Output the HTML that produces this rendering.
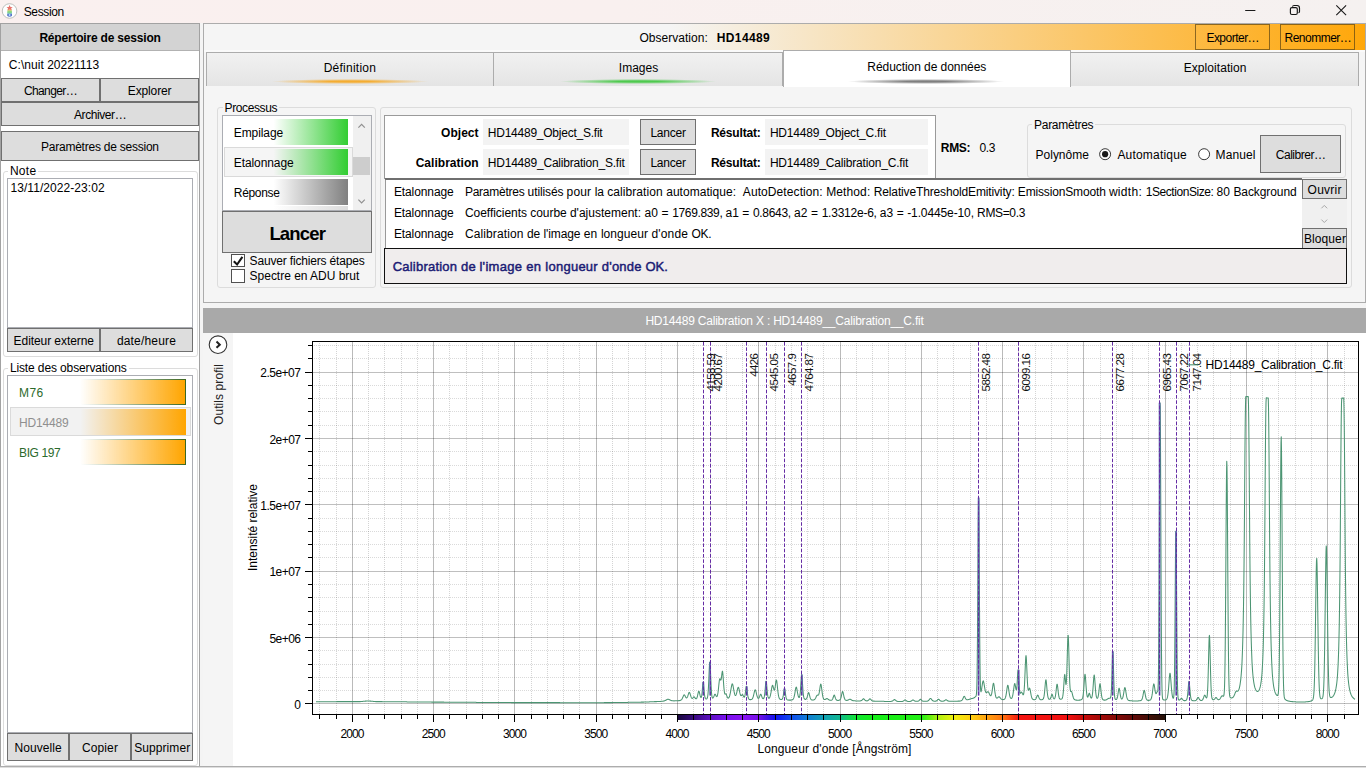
<!DOCTYPE html>
<html lang="fr"><head><meta charset="utf-8"><title>Session</title>
<style>
html,body{margin:0;padding:0;}
body{width:1366px;height:768px;overflow:hidden;background:#f9f0ef;font-family:"Liberation Sans",sans-serif;font-size:12px;color:#000;position:relative;}
.a{position:absolute;box-sizing:border-box;}
.t{position:absolute;white-space:pre;}
.btn{background:#dddddd;border:1px solid #707070;}
.gb{border:1px solid #dcdcdc;border-radius:3px;}
svg{position:absolute;left:0;top:0;}
svg text{font-family:"Liberation Sans",sans-serif;}
</style></head><body>
<div class="a " style="left:0px;top:0px;width:1366px;height:23px;background:linear-gradient(to right,#faf0ef 0,#f9f0ef 45%,#f5f1f0 100%);"></div>
<svg width="24" height="24" viewBox="0 0 24 24" style="left:0;top:0">
<circle cx="9.55" cy="11" r="7.3" fill="#fefefe" stroke="#b4b8b4" stroke-width="0.9"/>
<g opacity=".82"><rect x="7.6" y="9.2" width="4" height="1.6" fill="#f0a040"/><rect x="7.3" y="10.6" width="4.6" height="2.4" fill="#7ad060"/>
<rect x="7.3" y="12.6" width="4.6" height="1.2" fill="#50c0a0"/>
<path d="M7.2 13.8 H12 V15.6 Q11.4 16.8 9.6 16.8 Q7.8 16.8 7.2 15.6 Z" fill="#3a5cc0"/><circle cx="9.6" cy="15" r="0.9" fill="#9fd8ff"/>
<path d="M9.6 4.9 L10.5 7.0 L12.7 7.2 L11.1 8.5 L11.6 10.2 L9.6 9.2 L7.6 10.2 L8.1 8.5 L6.5 7.2 L8.7 7.0 Z" fill="#e2524a"/></g>
</svg>
<span class="t" style="left:23.70px;top:3px;font-size:12px;line-height:18px;letter-spacing:-0.356px;">Session</span>
<svg width="140" height="24" viewBox="1226 0 140 24" style="left:1226px;top:0">
<path d="M1245.2 10.5 H1255.4" stroke="#1a1a1a" stroke-width="1" fill="none"/>
<rect x="1290.4" y="7.6" width="6.9" height="6.9" rx="1.5" fill="none" stroke="#151515" stroke-width="1.15"/>
<path d="M1292.4 6.6 Q1292.7 5.5 1294 5.5 H1297 Q1299.5 5.5 1299.5 8 V11.4 Q1299.5 12.4 1298.5 12.6" fill="none" stroke="#151515" stroke-width="1.15"/>
<path d="M1336.3 5.4 L1346.1 15.2 M1346.1 5.4 L1336.3 15.2" stroke="#1a1a1a" stroke-width="1.1" fill="none"/>
</svg>
<div class="a " style="left:0px;top:23px;width:1366px;height:745px;background:#f4f4f4;"></div>
<div class="a " style="left:0px;top:23px;width:200px;height:744px;background:#fff;border:1px solid #a2a2a2;"></div>
<div class="a " style="left:1px;top:24px;width:198px;height:27px;background:#d3d3d3;border-bottom:1px solid #b2b2b2;"></div>
<span class="t" style="left:39.40px;top:29px;font-size:12px;line-height:18px;letter-spacing:-0.194px;font-weight:bold;">Répertoire de session</span>
<span class="t" style="left:8.80px;top:56px;font-size:12px;line-height:18px;letter-spacing:0.043px;">C:\nuit 20221113</span>
<div class="a btn" style="left:1px;top:78px;width:99px;height:24px;"></div>
<div class="a btn" style="left:100px;top:78px;width:99px;height:24px;"></div>
<span class="t" style="left:23.90px;top:82px;font-size:12px;line-height:18px;letter-spacing:-0.603px;">Changer…</span>
<span class="t" style="left:127.80px;top:82px;font-size:12px;line-height:18px;letter-spacing:-0.135px;">Explorer</span>
<div class="a btn" style="left:1px;top:102px;width:198px;height:24px;"></div>
<span class="t" style="left:74.00px;top:106px;font-size:12px;line-height:18px;letter-spacing:-0.423px;">Archiver…</span>
<div class="a btn" style="left:1px;top:131px;width:198px;height:29.5px;"></div>
<span class="t" style="left:41.00px;top:138px;font-size:12px;line-height:18px;letter-spacing:-0.234px;">Paramètres de session</span>
<div class="a gb" style="left:2.5px;top:170.5px;width:195px;height:186px;"></div>
<div class="a " style="left:8px;top:164px;width:30px;height:14px;background:#fff;"></div>
<span class="t" style="left:9.90px;top:162px;font-size:12px;line-height:18px;letter-spacing:0.288px;">Note</span>
<div class="a " style="left:7px;top:178px;width:186px;height:150px;background:#fff;border:1px solid #abadb3;"></div>
<span class="t" style="left:10.40px;top:179px;font-size:12px;line-height:18px;letter-spacing:0.070px;">13/11/2022-23:02</span>
<div class="a btn" style="left:7px;top:328px;width:93px;height:24px;"></div>
<div class="a btn" style="left:100px;top:328px;width:93px;height:24px;"></div>
<span class="t" style="left:13.60px;top:332px;font-size:12px;line-height:18px;letter-spacing:-0.072px;">Editeur externe</span>
<span class="t" style="left:116.90px;top:332px;font-size:12px;line-height:18px;letter-spacing:0.183px;">date/heure</span>
<div class="a gb" style="left:2.5px;top:367.5px;width:195px;height:398px;"></div>
<div class="a " style="left:8px;top:361px;width:121px;height:14px;background:#fff;"></div>
<span class="t" style="left:9.90px;top:359px;font-size:12px;line-height:18px;letter-spacing:-0.122px;">Liste des observations</span>
<div class="a " style="left:7px;top:375px;width:186px;height:358px;background:#fff;border:1px solid #abadb3;"></div>
<div class="a " style="left:9.5px;top:379px;width:176.5px;height:26px;background:linear-gradient(to right,rgba(50,95,20,0) 0,rgba(50,95,20,0) 40%,rgba(50,95,20,.95) 100%);"></div>
<div class="a " style="left:9.5px;top:380px;width:175.5px;height:24px;background:linear-gradient(to right,rgba(255,165,0,0) 0,rgba(255,165,0,0) 40%,#ffa500 100%),#fff;"></div>
<span class="t" style="left:19.10px;top:384px;font-size:12px;line-height:18px;letter-spacing:0.319px;color:#2c6a2c;">M76</span>
<div class="a " style="left:9.5px;top:407.3px;width:181px;height:29px;background:#f2f2f2;border:1px solid #dadada;"></div>
<div class="a " style="left:9.5px;top:409.3px;width:176.5px;height:25.5px;background:linear-gradient(to right,rgba(255,165,0,0) 0,rgba(255,165,0,0) 40%,#ffa500 100%);"></div>
<span class="t" style="left:19.10px;top:414px;font-size:12px;line-height:18px;letter-spacing:-0.171px;color:#8f8f8f;">HD14489</span>
<div class="a " style="left:9.5px;top:439px;width:176.5px;height:26px;background:linear-gradient(to right,rgba(50,95,20,0) 0,rgba(50,95,20,0) 40%,rgba(50,95,20,.95) 100%);"></div>
<div class="a " style="left:9.5px;top:440px;width:175.5px;height:24px;background:linear-gradient(to right,rgba(255,165,0,0) 0,rgba(255,165,0,0) 40%,#ffa500 100%),#fff;"></div>
<span class="t" style="left:19.10px;top:444px;font-size:12px;line-height:18px;letter-spacing:-0.404px;color:#2c6a2c;">BIG 197</span>
<div class="a btn" style="left:7px;top:733px;width:62px;height:27.5px;"></div>
<div class="a btn" style="left:69px;top:733px;width:62px;height:27.5px;"></div>
<div class="a btn" style="left:131px;top:733px;width:62px;height:27.5px;"></div>
<span class="t" style="left:14.40px;top:739px;font-size:12px;line-height:18px;letter-spacing:0.101px;">Nouvelle</span>
<span class="t" style="left:82.00px;top:739px;font-size:12px;line-height:18px;letter-spacing:0.109px;">Copier</span>
<span class="t" style="left:134.20px;top:739px;font-size:12px;line-height:18px;letter-spacing:0.083px;">Supprimer</span>
<div class="a " style="left:203px;top:23px;width:1163px;height:280px;background:#f5f5f5;border:1px solid #acacac;"></div>
<div class="a " style="left:204px;top:50px;width:1161px;height:2px;background:#fafafa;"></div>
<div class="a " style="left:204px;top:24px;width:1161px;height:26px;background:linear-gradient(to right,#f5f5f5 0,#f5f5f5 40%,#ffa70a 100%);"></div>
<span class="t" style="left:639.40px;top:29px;font-size:12px;line-height:18px;letter-spacing:0.031px;">Observation:</span>
<span class="t" style="left:716.70px;top:29px;font-size:12px;line-height:18px;letter-spacing:0.400px;font-weight:bold;">HD14489</span>
<div class="a " style="left:1195px;top:24px;width:75px;height:26px;border:1px solid rgba(95,70,20,.72);"></div>
<div class="a " style="left:1280px;top:24px;width:75px;height:26px;border:1px solid rgba(95,70,20,.72);"></div>
<span class="t" style="left:1206.40px;top:29px;font-size:12px;line-height:18px;letter-spacing:-0.517px;">Exporter…</span>
<span class="t" style="left:1284.50px;top:29px;font-size:12px;line-height:18px;letter-spacing:-0.505px;">Renommer…</span>
<div class="a " style="left:206px;top:52px;width:288px;height:34px;background:linear-gradient(to bottom,#f1f1f1 0,#ebebeb 50%,#e4e4e4 100%);border:1px solid #acacac;border-bottom:none;"></div>
<div class="a " style="left:493px;top:52px;width:290px;height:34px;background:linear-gradient(to bottom,#f1f1f1 0,#ebebeb 50%,#e4e4e4 100%);border:1px solid #acacac;border-bottom:none;"></div>
<div class="a " style="left:1070px;top:52px;width:289px;height:34px;background:linear-gradient(to bottom,#f1f1f1 0,#ebebeb 50%,#e4e4e4 100%);border:1px solid #acacac;border-bottom:none;"></div>
<div class="a " style="left:782.5px;top:50px;width:288px;height:36.5px;background:#fff;border:1px solid #acacac;border-bottom:none;"></div>
<div class="a " style="left:272px;top:79px;width:156px;height:5.4px;background:radial-gradient(ellipse 50% 50% at 50% 50%,rgba(245,170,40,.95) 0,rgba(245,170,40,.95) 25%,rgba(255,255,255,0) 100%);"></div>
<div class="a " style="left:560px;top:79px;width:156px;height:5.4px;background:radial-gradient(ellipse 50% 50% at 50% 50%,rgba(70,200,70,.95) 0,rgba(70,200,70,.95) 25%,rgba(255,255,255,0) 100%);"></div>
<div class="a " style="left:848px;top:79px;width:156px;height:5.4px;background:radial-gradient(ellipse 50% 50% at 50% 50%,rgba(105,105,105,.85) 0,rgba(105,105,105,.85) 25%,rgba(255,255,255,0) 100%);"></div>
<span class="t" style="left:323.70px;top:59px;font-size:12px;line-height:18px;letter-spacing:0.248px;">Définition</span>
<span class="t" style="left:618.80px;top:59px;font-size:12px;line-height:18px;letter-spacing:0.009px;">Images</span>
<span class="t" style="left:867.30px;top:58px;font-size:12px;line-height:18px;letter-spacing:-0.059px;">Réduction de données</span>
<span class="t" style="left:1183.70px;top:59px;font-size:12px;line-height:18px;letter-spacing:0.072px;">Exploitation</span>
<div class="a gb" style="left:217px;top:107px;width:159px;height:181px;"></div>
<div class="a " style="left:223px;top:101px;width:56px;height:13px;background:#f5f5f5;"></div>
<span class="t" style="left:224.60px;top:99px;font-size:12px;line-height:18px;letter-spacing:-0.391px;">Processus</span>
<div class="a " style="left:222px;top:115px;width:150px;height:96px;background:#fff;border:1px solid #abadb3;"></div>
<div class="a " style="left:224px;top:119px;width:124px;height:26px;background:linear-gradient(to right,rgba(50,205,50,0) 0,rgba(50,205,50,0) 40%,#32cd32 100%);"></div>
<div class="a " style="left:224px;top:147px;width:129px;height:30px;background:#f5f5f5;border:1px solid #dadada;"></div>
<div class="a " style="left:224px;top:149px;width:124px;height:26px;background:linear-gradient(to right,rgba(50,205,50,0) 0,rgba(50,205,50,0) 40%,#32cd32 100%);"></div>
<div class="a " style="left:224px;top:179px;width:124px;height:26px;background:linear-gradient(to right,rgba(128,128,128,0) 0,rgba(128,128,128,0) 40%,#808080 100%);"></div>
<div class="a " style="left:224px;top:206px;width:124px;height:4px;background:linear-gradient(to right,rgba(128,128,128,0) 0,rgba(128,128,128,0) 40%,rgba(128,128,128,.28) 100%);"></div>
<div class="a " style="left:353px;top:116px;width:18px;height:94px;background:#f0f0f0;"></div>
<div class="a " style="left:353px;top:157px;width:17px;height:18px;background:#cdcdcd;"></div>
<svg width="20" height="95" viewBox="352 115 20 95" style="left:352px;top:115px"><path d="M358.4 127.6 L361.6 124.4 L364.8 127.6" fill="none" stroke="#909090" stroke-width="1.2"/><path d="M358.4 199.6 L361.6 202.8 L364.8 199.6" fill="none" stroke="#909090" stroke-width="1.2"/></svg>
<span class="t" style="left:233.80px;top:124px;font-size:12px;line-height:18px;letter-spacing:-0.091px;">Empilage</span>
<span class="t" style="left:233.80px;top:154px;font-size:12px;line-height:18px;letter-spacing:-0.092px;">Etalonnage</span>
<span class="t" style="left:233.80px;top:184px;font-size:12px;line-height:18px;letter-spacing:-0.319px;">Réponse</span>
<div class="a btn" style="left:222px;top:211px;width:150px;height:42px;"></div>
<span class="t" style="left:269.40px;top:219px;font-size:18.5px;line-height:29px;letter-spacing:-0.844px;font-weight:bold;">Lancer</span>
<div class="a " style="left:231px;top:254px;width:14px;height:13px;background:#fff;border:1px solid #505050;"></div>
<svg width="14" height="14" viewBox="0 0 14 14" style="left:231px;top:254px"><path d="M2.8 7.3 L6.1 10.5 L11.4 2.8" fill="none" stroke="#151515" stroke-width="2.1"/></svg>
<div class="a " style="left:231px;top:269px;width:14px;height:14px;background:#fff;border:1px solid #505050;"></div>
<span class="t" style="left:249.60px;top:252px;font-size:12px;line-height:18px;letter-spacing:-0.169px;">Sauver fichiers étapes</span>
<span class="t" style="left:249.60px;top:267px;font-size:12px;line-height:18px;letter-spacing:-0.018px;">Spectre en ADU brut</span>
<div class="a gb" style="left:379.5px;top:107px;width:972px;height:181px;"></div>
<div class="a " style="left:384px;top:115px;width:552px;height:64px;background:#fff;border:1px solid #9a9a9a;border-bottom:none;"></div>
<div class="a " style="left:384.5px;top:178px;width:917.5px;height:1.6px;background:#6f6f6f;"></div>
<span class="t" style="left:441.00px;top:124px;font-size:12px;line-height:18px;letter-spacing:0.044px;font-weight:bold;">Object</span>
<span class="t" style="left:415.70px;top:154px;font-size:12px;line-height:18px;letter-spacing:0.021px;font-weight:bold;">Calibration</span>
<div class="a " style="left:483.3px;top:119px;width:146px;height:25.6px;background:#f3f3f3;"></div>
<div class="a btn" style="left:640px;top:119px;width:56px;height:25.7px;"></div>
<div class="a " style="left:765.3px;top:119px;width:163px;height:25.6px;background:#f3f3f3;"></div>
<div class="a " style="left:483.3px;top:149px;width:146px;height:25.6px;background:#f3f3f3;"></div>
<div class="a btn" style="left:640px;top:149px;width:56px;height:25.7px;"></div>
<div class="a " style="left:765.3px;top:149px;width:163px;height:25.6px;background:#f3f3f3;"></div>
<span class="t" style="left:487.80px;top:124px;font-size:12px;line-height:18px;letter-spacing:-0.240px;">HD14489_Object_S.fit</span>
<span class="t" style="left:487.80px;top:154px;font-size:12px;line-height:18px;letter-spacing:-0.215px;">HD14489_Calibration_S.fit</span>
<span class="t" style="left:650.40px;top:124px;font-size:12px;line-height:18px;letter-spacing:-0.215px;">Lancer</span>
<span class="t" style="left:650.40px;top:154px;font-size:12px;line-height:18px;letter-spacing:-0.215px;">Lancer</span>
<span class="t" style="left:710.90px;top:124px;font-size:12px;line-height:18px;letter-spacing:-0.182px;font-weight:bold;">Résultat:</span>
<span class="t" style="left:710.90px;top:154px;font-size:12px;line-height:18px;letter-spacing:-0.182px;font-weight:bold;">Résultat:</span>
<span class="t" style="left:769.90px;top:124px;font-size:12px;line-height:18px;letter-spacing:-0.208px;">HD14489_Object_C.fit</span>
<span class="t" style="left:769.90px;top:154px;font-size:12px;line-height:18px;letter-spacing:-0.182px;">HD14489_Calibration_C.fit</span>
<span class="t" style="left:940.80px;top:139px;font-size:12px;line-height:18px;letter-spacing:-0.315px;font-weight:bold;">RMS:</span>
<span class="t" style="left:979.40px;top:139px;font-size:12px;line-height:18px;letter-spacing:-0.293px;">0.3</span>
<div class="a gb" style="left:1027px;top:124px;width:318.5px;height:53.5px;"></div>
<div class="a " style="left:1032px;top:118px;width:63px;height:13px;background:#f5f5f5;"></div>
<span class="t" style="left:1034.00px;top:116px;font-size:12px;line-height:18px;letter-spacing:-0.272px;">Paramètres</span>
<span class="t" style="left:1035.60px;top:146px;font-size:12px;line-height:18px;letter-spacing:-0.020px;">Polynôme</span>
<svg width="120" height="16" viewBox="1096 146 120 16" style="left:1096px;top:146px"><circle cx="1105.1" cy="154.2" r="5.5" fill="#fff" stroke="#3a3a3a" stroke-width="1"/><circle cx="1105.1" cy="154.2" r="3.1" fill="#1a1a1a"/><circle cx="1204.1" cy="154.2" r="5.5" fill="#fff" stroke="#3a3a3a" stroke-width="1"/></svg>
<span class="t" style="left:1117.40px;top:146px;font-size:12px;line-height:18px;letter-spacing:0.193px;">Automatique</span>
<span class="t" style="left:1215.60px;top:146px;font-size:12px;line-height:18px;letter-spacing:0.108px;">Manuel</span>
<div class="a btn" style="left:1260px;top:135.2px;width:81px;height:37.5px;"></div>
<span class="t" style="left:1275.80px;top:146px;font-size:12px;line-height:18px;letter-spacing:-0.490px;">Calibrer…</span>
<div class="a " style="left:384.5px;top:179.5px;width:917px;height:69px;background:#fff;border-left:1px solid #9a9a9a;"></div>
<div class="a " style="left:1301.5px;top:179px;width:45.5px;height:70px;background:#f0f0f0;"></div>
<div class="a btn" style="left:1301.5px;top:179px;width:45.5px;height:19.5px;"></div>
<div class="a btn" style="left:1301.5px;top:228px;width:45.5px;height:21px;"></div>
<span class="t" style="left:1307.60px;top:181px;font-size:12px;line-height:18px;letter-spacing:0.223px;">Ouvrir</span>
<span class="t" style="left:1303.90px;top:230px;font-size:12px;line-height:18px;letter-spacing:0.106px;">Bloquer</span>
<svg width="12" height="24" viewBox="1318 202 12 24" style="left:1318px;top:202px"><path d="M1321.4 208.3 L1324.3 205.4 L1327.2 208.3" fill="none" stroke="#a8a8a8" stroke-width="1"/><path d="M1321.4 219.6 L1324.3 222.5 L1327.2 219.6" fill="none" stroke="#a8a8a8" stroke-width="1"/></svg>
<span class="t" style="left:393.90px;top:183px;font-size:12px;line-height:18px;letter-spacing:-0.102px;">Etalonnage</span>
<span class="t" style="left:393.90px;top:204px;font-size:12px;line-height:18px;letter-spacing:-0.102px;">Etalonnage</span>
<span class="t" style="left:393.90px;top:225px;font-size:12px;line-height:18px;letter-spacing:-0.102px;">Etalonnage</span>
<span class="t" style="left:464.90px;top:183px;font-size:12px;line-height:18px;letter-spacing:-0.241px;">Paramètres </span>
<span class="t" style="left:527.60px;top:183px;font-size:12px;line-height:18px;letter-spacing:-0.113px;">utilisés </span>
<span class="t" style="left:566.60px;top:183px;font-size:12px;line-height:18px;letter-spacing:0.150px;">pour </span>
<span class="t" style="left:594.70px;top:183px;font-size:12px;line-height:18px;letter-spacing:-0.058px;">la </span>
<span class="t" style="left:607.20px;top:183px;font-size:12px;line-height:18px;letter-spacing:0.081px;">calibration </span>
<span class="t" style="left:666.20px;top:183px;font-size:12px;line-height:18px;letter-spacing:0.040px;">automatique:  </span>
<span class="t" style="left:742.80px;top:183px;font-size:12px;line-height:18px;letter-spacing:0.090px;">AutoDetection: </span>
<span class="t" style="left:826.20px;top:183px;font-size:12px;line-height:18px;letter-spacing:0.114px;">Method: </span>
<span class="t" style="left:873.80px;top:183px;font-size:12px;line-height:18px;letter-spacing:-0.144px;">RelativeThresholdEmitivity: </span>
<span class="t" style="left:1017.80px;top:183px;font-size:12px;line-height:18px;letter-spacing:-0.151px;">EmissionSmooth </span>
<span class="t" style="left:1108.90px;top:183px;font-size:12px;line-height:18px;letter-spacing:0.303px;">width: </span>
<span class="t" style="left:1145.70px;top:183px;font-size:12px;line-height:18px;letter-spacing:-0.429px;">1SectionSize: </span>
<span class="t" style="left:1216.40px;top:183px;font-size:12px;line-height:18px;letter-spacing:0.107px;">80 </span>
<span class="t" style="left:1233.40px;top:183px;font-size:12px;line-height:18px;letter-spacing:-0.084px;">Background</span>
<span class="t" style="left:464.90px;top:204px;font-size:12px;line-height:18px;letter-spacing:-0.031px;">Coefficients </span>
<span class="t" style="left:530.30px;top:204px;font-size:12px;line-height:18px;letter-spacing:-0.060px;">courbe </span>
<span class="t" style="left:569.90px;top:204px;font-size:12px;line-height:18px;letter-spacing:0.012px;">d'ajustement: </span>
<span class="t" style="left:644.40px;top:204px;font-size:12px;line-height:18px;letter-spacing:0.155px;">a0 = </span>
<span class="t" style="left:672.20px;top:204px;font-size:12px;line-height:18px;letter-spacing:-0.351px;">1769.839, </span>
<span class="t" style="left:725.40px;top:204px;font-size:12px;line-height:18px;letter-spacing:0.095px;">a1 = </span>
<span class="t" style="left:752.90px;top:204px;font-size:12px;line-height:18px;letter-spacing:-0.296px;">0.8643, </span>
<span class="t" style="left:793.90px;top:204px;font-size:12px;line-height:18px;letter-spacing:0.155px;">a2 = </span>
<span class="t" style="left:821.70px;top:204px;font-size:12px;line-height:18px;letter-spacing:-0.237px;">1.3312e-6, </span>
<span class="t" style="left:879.80px;top:204px;font-size:12px;line-height:18px;letter-spacing:0.075px;">a3 = </span>
<span class="t" style="left:907.20px;top:204px;font-size:12px;line-height:18px;letter-spacing:-0.114px;">-1.0445e-10, </span>
<span class="t" style="left:977.10px;top:204px;font-size:12px;line-height:18px;letter-spacing:-0.351px;">RMS=0.3</span>
<span class="t" style="left:464.90px;top:225px;font-size:12px;line-height:18px;letter-spacing:0.117px;">Calibration </span>
<span class="t" style="left:527.00px;top:225px;font-size:12px;line-height:18px;letter-spacing:-0.093px;">de </span>
<span class="t" style="left:543.40px;top:225px;font-size:12px;line-height:18px;letter-spacing:-0.084px;">l'image </span>
<span class="t" style="left:583.70px;top:225px;font-size:12px;line-height:18px;letter-spacing:0.173px;">en </span>
<span class="t" style="left:600.90px;top:225px;font-size:12px;line-height:18px;letter-spacing:0.063px;">longueur </span>
<span class="t" style="left:651.50px;top:225px;font-size:12px;line-height:18px;letter-spacing:0.158px;">d'onde </span>
<span class="t" style="left:691.60px;top:225px;font-size:12px;line-height:18px;letter-spacing:-0.324px;">OK.</span>
<div class="a " style="left:384px;top:248px;width:963px;height:35.6px;background:#f0eded;border:1.4px solid #111;"></div>
<span class="t" style="left:392.70px;top:256px;font-size:13px;line-height:21px;letter-spacing:0.221px;color:#1b1b74;-webkit-text-stroke:0.45px #1b1b74;">Calibration </span>
<span class="t" style="left:461.10px;top:256px;font-size:13px;line-height:21px;letter-spacing:0.077px;color:#1b1b74;-webkit-text-stroke:0.45px #1b1b74;">de </span>
<span class="t" style="left:479.40px;top:256px;font-size:13px;line-height:21px;letter-spacing:0.314px;color:#1b1b74;-webkit-text-stroke:0.45px #1b1b74;">l'image </span>
<span class="t" style="left:526.30px;top:256px;font-size:13px;line-height:21px;letter-spacing:0.310px;color:#1b1b74;-webkit-text-stroke:0.45px #1b1b74;">en </span>
<span class="t" style="left:545.30px;top:256px;font-size:13px;line-height:21px;letter-spacing:0.255px;color:#1b1b74;-webkit-text-stroke:0.45px #1b1b74;">longueur </span>
<span class="t" style="left:601.80px;top:256px;font-size:13px;line-height:21px;letter-spacing:0.209px;color:#1b1b74;-webkit-text-stroke:0.45px #1b1b74;">d'onde </span>
<span class="t" style="left:645.50px;top:256px;font-size:13px;line-height:21px;letter-spacing:0.002px;color:#1b1b74;-webkit-text-stroke:0.45px #1b1b74;">OK.</span>
<div class="a " style="left:203px;top:308px;width:1163px;height:25px;background:#a9a9a9;"></div>
<span class="t" style="left:645.40px;top:312px;font-size:12px;line-height:18px;letter-spacing:-0.208px;color:#fff;">HD14489 Calibration X : HD14489__Calibration__C.fit</span>
<div class="a " style="left:203px;top:333px;width:1163px;height:433px;background:#fff;"></div>
<div class="a " style="left:203px;top:333px;width:30px;height:433px;background:#f5f5f5;"></div>
<div class="a " style="left:0px;top:766px;width:1366px;height:1px;background:#adadad;"></div>
<div class="a " style="left:0px;top:767px;width:1366px;height:1px;background:#dedede;"></div>
<svg width="1163" height="435" viewBox="203 333 1163 435" style="left:203px;top:333px" font-size="12">
<path d="M314.0 690.5 H1358.5 M314.0 677.5 H1358.5 M314.0 664.5 H1358.5 M314.0 650.5 H1358.5 M314.0 624.5 H1358.5 M314.0 611.5 H1358.5 M314.0 597.5 H1358.5 M314.0 584.5 H1358.5 M314.0 557.5 H1358.5 M314.0 544.5 H1358.5 M314.0 531.5 H1358.5 M314.0 518.5 H1358.5 M314.0 491.5 H1358.5 M314.0 478.5 H1358.5 M314.0 465.5 H1358.5 M314.0 451.5 H1358.5 M314.0 425.5 H1358.5 M314.0 411.5 H1358.5 M314.0 398.5 H1358.5 M314.0 385.5 H1358.5 M314.0 358.5 H1358.5 M314.0 345.5 H1358.5" stroke="#000" stroke-opacity=".145" stroke-width="1" stroke-dasharray="1 1" shape-rendering="crispEdges" fill="none"/>
<path d="M319.5 343.0 V714.5 M336.5 343.0 V714.5 M368.5 343.0 V714.5 M384.5 343.0 V714.5 M401.5 343.0 V714.5 M417.5 343.0 V714.5 M449.5 343.0 V714.5 M466.5 343.0 V714.5 M482.5 343.0 V714.5 M498.5 343.0 V714.5 M531.5 343.0 V714.5 M547.5 343.0 V714.5 M563.5 343.0 V714.5 M579.5 343.0 V714.5 M612.5 343.0 V714.5 M628.5 343.0 V714.5 M645.5 343.0 V714.5 M661.5 343.0 V714.5 M693.5 343.0 V714.5 M710.5 343.0 V714.5 M726.5 343.0 V714.5 M742.5 343.0 V714.5 M775.5 343.0 V714.5 M791.5 343.0 V714.5 M807.5 343.0 V714.5 M823.5 343.0 V714.5 M856.5 343.0 V714.5 M872.5 343.0 V714.5 M888.5 343.0 V714.5 M905.5 343.0 V714.5 M937.5 343.0 V714.5 M953.5 343.0 V714.5 M970.5 343.0 V714.5 M986.5 343.0 V714.5 M1018.5 343.0 V714.5 M1035.5 343.0 V714.5 M1051.5 343.0 V714.5 M1067.5 343.0 V714.5 M1100.5 343.0 V714.5 M1116.5 343.0 V714.5 M1132.5 343.0 V714.5 M1148.5 343.0 V714.5 M1181.5 343.0 V714.5 M1197.5 343.0 V714.5 M1213.5 343.0 V714.5 M1230.5 343.0 V714.5 M1262.5 343.0 V714.5 M1278.5 343.0 V714.5 M1295.5 343.0 V714.5 M1311.5 343.0 V714.5 M1344.5 343.0 V714.5" stroke="#000" stroke-opacity=".17" stroke-width="1" stroke-dasharray="1 1" shape-rendering="crispEdges" fill="none"/>
<path d="M312.5 703.5 H1358.5 M312.5 637.5 H1358.5 M312.5 571.5 H1358.5 M312.5 504.5 H1358.5 M312.5 438.5 H1358.5 M312.5 372.5 H1358.5" stroke="#000" stroke-opacity=".25" stroke-width="1" shape-rendering="crispEdges" fill="none"/>
<path d="M352.5 341.5 V714.5 M433.5 341.5 V714.5 M514.5 341.5 V714.5 M596.5 341.5 V714.5 M677.5 341.5 V714.5 M758.5 341.5 V714.5 M840.5 341.5 V714.5 M921.5 341.5 V714.5 M1002.5 341.5 V714.5 M1083.5 341.5 V714.5 M1165.5 341.5 V714.5 M1246.5 341.5 V714.5 M1327.5 341.5 V714.5" stroke="#000" stroke-opacity=".27" stroke-width="1" shape-rendering="crispEdges" fill="none"/>
<path d="M316.00 701.7 L316.25 701.7 L316.50 701.7 L316.75 701.7 L317.00 701.7 L317.25 701.7 L317.50 701.7 L317.75 701.7 L318.00 701.7 L318.25 701.7 L318.50 701.7 L318.75 701.7 L319.00 701.7 L319.25 701.7 L319.50 701.7 L319.75 701.7 L320.00 701.7 L320.25 701.7 L320.50 701.7 L320.75 701.7 L321.00 701.7 L321.25 701.7 L321.50 701.7 L321.75 701.7 L322.00 701.7 L322.25 701.7 L322.50 701.7 L322.75 701.7 L323.00 701.7 L323.25 701.7 L323.50 701.7 L323.75 701.7 L324.00 701.7 L324.25 701.7 L324.50 701.7 L324.75 701.7 L325.00 701.7 L325.25 701.7 L325.50 701.7 L325.75 701.7 L326.00 701.7 L326.25 701.7 L326.50 701.7 L326.75 701.7 L327.00 701.7 L327.25 701.7 L327.50 701.7 L327.75 701.7 L328.00 701.7 L328.25 701.7 L328.50 701.7 L328.75 701.7 L329.00 701.7 L329.25 701.7 L329.50 701.7 L329.75 701.7 L330.00 701.7 L330.25 701.7 L330.50 701.7 L330.75 701.7 L331.00 701.7 L331.25 701.7 L331.50 701.7 L331.75 701.7 L332.00 701.7 L332.25 701.7 L332.50 701.7 L332.75 701.7 L333.00 701.7 L333.25 701.7 L333.50 701.7 L333.75 701.7 L334.00 701.7 L334.25 701.7 L334.50 701.7 L334.75 701.7 L335.00 701.7 L335.25 701.7 L335.50 701.7 L335.75 701.7 L336.00 701.7 L336.25 701.7 L336.50 701.7 L336.75 701.6 L337.00 701.6 L337.25 701.6 L337.50 701.6 L337.75 701.6 L338.00 701.6 L338.25 701.6 L338.50 701.6 L338.75 701.6 L339.00 701.6 L339.25 701.6 L339.50 701.6 L339.75 701.6 L340.00 701.6 L340.25 701.6 L340.50 701.6 L340.75 701.6 L341.00 701.6 L341.25 701.6 L341.50 701.6 L341.75 701.6 L342.00 701.6 L342.25 701.6 L342.50 701.6 L342.75 701.6 L343.00 701.6 L343.25 701.6 L343.50 701.6 L343.75 701.6 L344.00 701.6 L344.25 701.6 L344.50 701.6 L344.75 701.6 L345.00 701.6 L345.25 701.6 L345.50 701.6 L345.75 701.6 L346.00 701.6 L346.25 701.6 L346.50 701.6 L346.75 701.6 L347.00 701.6 L347.25 701.6 L347.50 701.6 L347.75 701.6 L348.00 701.6 L348.25 701.6 L348.50 701.6 L348.75 701.6 L349.00 701.6 L349.25 701.6 L349.50 701.6 L349.75 701.6 L350.00 701.6 L350.25 701.6 L350.50 701.6 L350.75 701.6 L351.00 701.6 L351.25 701.6 L351.50 701.6 L351.75 701.6 L352.00 701.6 L352.25 701.6 L352.50 701.6 L352.75 701.6 L353.00 701.6 L353.25 701.6 L353.50 701.6 L353.75 701.6 L354.00 701.6 L354.25 701.6 L354.50 701.6 L354.75 701.6 L355.00 701.6 L355.25 701.6 L355.50 701.6 L355.75 701.6 L356.00 701.6 L356.25 701.6 L356.50 701.6 L356.75 701.6 L357.00 701.6 L357.25 701.6 L357.50 701.6 L357.75 701.6 L358.00 701.6 L358.25 701.6 L358.50 701.6 L358.75 701.6 L359.00 701.6 L359.25 701.6 L359.50 701.6 L359.75 701.6 L360.00 701.6 L360.25 701.6 L360.50 701.6 L360.75 701.5 L361.00 701.5 L361.25 701.5 L361.50 701.5 L361.75 701.4 L362.00 701.4 L362.25 701.4 L362.50 701.4 L362.75 701.4 L363.00 701.3 L363.25 701.3 L363.50 701.3 L363.75 701.3 L364.00 701.2 L364.25 701.2 L364.50 701.2 L364.75 701.2 L365.00 701.2 L365.25 701.1 L365.50 701.1 L365.75 701.1 L366.00 701.1 L366.25 701.1 L366.50 701.0 L366.75 701.0 L367.00 701.0 L367.25 701.0 L367.50 700.9 L367.75 700.9 L368.00 700.9 L368.25 700.9 L368.50 700.9 L368.75 701.0 L369.00 701.0 L369.25 701.0 L369.50 701.0 L369.75 701.1 L370.00 701.1 L370.25 701.1 L370.50 701.1 L370.75 701.1 L371.00 701.2 L371.25 701.2 L371.50 701.2 L371.75 701.2 L372.00 701.2 L372.25 701.3 L372.50 701.3 L372.75 701.3 L373.00 701.3 L373.25 701.4 L373.50 701.4 L373.75 701.4 L374.00 701.4 L374.25 701.4 L374.50 701.5 L374.75 701.5 L375.00 701.5 L375.25 701.5 L375.50 701.6 L375.75 701.6 L376.00 701.6 L376.25 701.6 L376.50 701.6 L376.75 701.6 L377.00 701.6 L377.25 701.6 L377.50 701.6 L377.75 701.6 L378.00 701.6 L378.25 701.6 L378.50 701.6 L378.75 701.6 L379.00 701.6 L379.25 701.6 L379.50 701.6 L379.75 701.6 L380.00 701.6 L380.25 701.6 L380.50 701.6 L380.75 701.6 L381.00 701.6 L381.25 701.6 L381.50 701.6 L381.75 701.6 L382.00 701.6 L382.25 701.7 L382.50 701.7 L382.75 701.7 L383.00 701.7 L383.25 701.7 L383.50 701.7 L383.75 701.7 L384.00 701.7 L384.25 701.7 L384.50 701.7 L384.75 701.7 L385.00 701.7 L385.25 701.7 L385.50 701.7 L385.75 701.7 L386.00 701.7 L386.25 701.7 L386.50 701.7 L386.75 701.7 L387.00 701.7 L387.25 701.7 L387.50 701.7 L387.75 701.7 L388.00 701.7 L388.25 701.7 L388.50 701.7 L388.75 701.7 L389.00 701.7 L389.25 701.7 L389.50 701.7 L389.75 701.7 L390.00 701.7 L390.25 701.7 L390.50 701.7 L390.75 701.7 L391.00 701.7 L391.25 701.7 L391.50 701.7 L391.75 701.7 L392.00 701.7 L392.25 701.7 L392.50 701.7 L392.75 701.7 L393.00 701.7 L393.25 701.7 L393.50 701.7 L393.75 701.7 L394.00 701.7 L394.25 701.7 L394.50 701.8 L394.75 701.8 L395.00 701.8 L395.25 701.8 L395.50 701.8 L395.75 701.8 L396.00 701.8 L396.25 701.8 L396.50 701.8 L396.75 701.8 L397.00 701.8 L397.25 701.8 L397.50 701.8 L397.75 701.8 L398.00 701.8 L398.25 701.8 L398.50 701.8 L398.75 701.8 L399.00 701.8 L399.25 701.8 L399.50 701.8 L399.75 701.8 L400.00 701.8 L400.25 701.8 L400.50 701.8 L400.75 701.8 L401.00 701.8 L401.25 701.8 L401.50 701.8 L401.75 701.8 L402.00 701.8 L402.25 701.8 L402.50 701.8 L402.75 701.8 L403.00 701.8 L403.25 701.8 L403.50 701.8 L403.75 701.8 L404.00 701.8 L404.25 701.8 L404.50 701.8 L404.75 701.8 L405.00 701.8 L405.25 701.8 L405.50 701.8 L405.75 701.8 L406.00 701.8 L406.25 701.8 L406.50 701.8 L406.75 701.8 L407.00 701.9 L407.25 701.9 L407.50 701.9 L407.75 701.9 L408.00 701.9 L408.25 701.9 L408.50 701.9 L408.75 701.9 L409.00 701.9 L409.25 701.9 L409.50 701.9 L409.75 701.9 L410.00 701.9 L410.25 701.9 L410.50 701.9 L410.75 701.9 L411.00 701.9 L411.25 701.9 L411.50 701.9 L411.75 701.9 L412.00 701.9 L412.25 701.9 L412.50 701.9 L412.75 701.9 L413.00 701.9 L413.25 701.9 L413.50 701.9 L413.75 701.9 L414.00 701.9 L414.25 701.9 L414.50 701.9 L414.75 701.9 L415.00 701.9 L415.25 701.9 L415.50 701.9 L415.75 701.9 L416.00 701.9 L416.25 701.9 L416.50 701.9 L416.75 701.9 L417.00 701.9 L417.25 701.9 L417.50 701.9 L417.75 701.9 L418.00 701.9 L418.25 701.9 L418.50 701.9 L418.75 701.9 L419.00 701.9 L419.25 702.0 L419.50 702.0 L419.75 702.0 L420.00 702.0 L420.25 702.0 L420.50 702.0 L420.75 702.0 L421.00 702.0 L421.25 702.0 L421.50 702.0 L421.75 702.0 L422.00 702.0 L422.25 702.0 L422.50 702.0 L422.75 702.0 L423.00 702.0 L423.25 702.0 L423.50 702.0 L423.75 702.0 L424.00 702.0 L424.25 702.0 L424.50 702.0 L424.75 702.0 L425.00 702.0 L425.25 702.0 L425.50 702.0 L425.75 702.0 L426.00 702.0 L426.25 702.0 L426.50 702.0 L426.75 702.0 L427.00 702.0 L427.25 702.0 L427.50 702.0 L427.75 702.0 L428.00 702.0 L428.25 702.0 L428.50 702.0 L428.75 702.0 L429.00 702.0 L429.25 702.0 L429.50 702.0 L429.75 702.0 L430.00 702.0 L430.25 702.0 L430.50 702.0 L430.75 702.0 L431.00 702.0 L431.25 702.0 L431.50 702.1 L431.75 702.1 L432.00 702.1 L432.25 702.1 L432.50 702.1 L432.75 702.1 L433.00 702.1 L433.25 702.1 L433.50 702.1 L433.75 702.1 L434.00 702.1 L434.25 702.1 L434.50 702.1 L434.75 702.1 L435.00 702.1 L435.25 702.1 L435.50 702.1 L435.75 702.1 L436.00 702.1 L436.25 702.1 L436.50 702.1 L436.75 702.1 L437.00 702.1 L437.25 702.1 L437.50 702.1 L437.75 702.1 L438.00 702.1 L438.25 702.1 L438.50 702.1 L438.75 702.1 L439.00 702.1 L439.25 702.1 L439.50 702.1 L439.75 702.1 L440.00 702.1 L440.25 702.1 L440.50 702.1 L440.75 702.1 L441.00 702.1 L441.25 702.1 L441.50 702.1 L441.75 702.1 L442.00 702.1 L442.25 702.1 L442.50 702.1 L442.75 702.1 L443.00 702.1 L443.25 702.1 L443.50 702.1 L443.75 702.1 L444.00 702.2 L444.25 702.2 L444.50 702.2 L444.75 702.2 L445.00 702.2 L445.25 702.2 L445.50 702.2 L445.75 702.2 L446.00 702.2 L446.25 702.2 L446.50 702.2 L446.75 702.2 L447.00 702.2 L447.25 702.2 L447.50 702.2 L447.75 702.2 L448.00 702.2 L448.25 702.2 L448.50 702.2 L448.75 702.2 L449.00 702.2 L449.25 702.2 L449.50 702.2 L449.75 702.2 L450.00 702.2 L450.25 702.2 L450.50 702.2 L450.75 702.2 L451.00 702.2 L451.25 702.2 L451.50 702.2 L451.75 702.2 L452.00 702.2 L452.25 702.2 L452.50 702.2 L452.75 702.2 L453.00 702.2 L453.25 702.2 L453.50 702.2 L453.75 702.2 L454.00 702.2 L454.25 702.2 L454.50 702.2 L454.75 702.2 L455.00 702.2 L455.25 702.2 L455.50 702.2 L455.75 702.2 L456.00 702.2 L456.25 702.2 L456.50 702.2 L456.75 702.2 L457.00 702.2 L457.25 702.2 L457.50 702.2 L457.75 702.2 L458.00 702.2 L458.25 702.2 L458.50 702.2 L458.75 702.2 L459.00 702.3 L459.25 702.3 L459.50 702.3 L459.75 702.3 L460.00 702.3 L460.25 702.3 L460.50 702.3 L460.75 702.3 L461.00 702.3 L461.25 702.3 L461.50 702.3 L461.75 702.3 L462.00 702.3 L462.25 702.3 L462.50 702.3 L462.75 702.3 L463.00 702.3 L463.25 702.3 L463.50 702.3 L463.75 702.3 L464.00 702.3 L464.25 702.3 L464.50 702.3 L464.75 702.3 L465.00 702.3 L465.25 702.3 L465.50 702.3 L465.75 702.3 L466.00 702.3 L466.25 702.3 L466.50 702.3 L466.75 702.3 L467.00 702.3 L467.25 702.3 L467.50 702.3 L467.75 702.3 L468.00 702.3 L468.25 702.3 L468.50 702.3 L468.75 702.3 L469.00 702.3 L469.25 702.3 L469.50 702.3 L469.75 702.3 L470.00 702.3 L470.25 702.3 L470.50 702.3 L470.75 702.3 L471.00 702.3 L471.25 702.3 L471.50 702.3 L471.75 702.3 L472.00 702.3 L472.25 702.3 L472.50 702.3 L472.75 702.3 L473.00 702.3 L473.25 702.3 L473.50 702.3 L473.75 702.3 L474.00 702.3 L474.25 702.3 L474.50 702.3 L474.75 702.3 L475.00 702.3 L475.25 702.3 L475.50 702.3 L475.75 702.3 L476.00 702.3 L476.25 702.4 L476.50 702.4 L476.75 702.4 L477.00 702.4 L477.25 702.4 L477.50 702.4 L477.75 702.4 L478.00 702.4 L478.25 702.4 L478.50 702.4 L478.75 702.4 L479.00 702.4 L479.25 702.4 L479.50 702.4 L479.75 702.4 L480.00 702.4 L480.25 702.4 L480.50 702.4 L480.75 702.4 L481.00 702.4 L481.25 702.4 L481.50 702.4 L481.75 702.4 L482.00 702.4 L482.25 702.4 L482.50 702.4 L482.75 702.4 L483.00 702.4 L483.25 702.4 L483.50 702.4 L483.75 702.4 L484.00 702.4 L484.25 702.4 L484.50 702.4 L484.75 702.4 L485.00 702.4 L485.25 702.4 L485.50 702.4 L485.75 702.4 L486.00 702.4 L486.25 702.4 L486.50 702.4 L486.75 702.4 L487.00 702.4 L487.25 702.4 L487.50 702.4 L487.75 702.4 L488.00 702.4 L488.25 702.4 L488.50 702.4 L488.75 702.4 L489.00 702.4 L489.25 702.4 L489.50 702.4 L489.75 702.4 L490.00 702.4 L490.25 702.4 L490.50 702.4 L490.75 702.4 L491.00 702.4 L491.25 702.4 L491.50 702.4 L491.75 702.4 L492.00 702.4 L492.25 702.4 L492.50 702.4 L492.75 702.4 L493.00 702.4 L493.25 702.4 L493.50 702.4 L493.75 702.5 L494.00 702.5 L494.25 702.5 L494.50 702.5 L494.75 702.5 L495.00 702.5 L495.25 702.5 L495.50 702.5 L495.75 702.5 L496.00 702.5 L496.25 702.5 L496.50 702.5 L496.75 702.5 L497.00 702.5 L497.25 702.5 L497.50 702.5 L497.75 702.5 L498.00 702.5 L498.25 702.5 L498.50 702.5 L498.75 702.5 L499.00 702.5 L499.25 702.5 L499.50 702.5 L499.75 702.5 L500.00 702.5 L500.25 702.5 L500.50 702.5 L500.75 702.5 L501.00 702.5 L501.25 702.5 L501.50 702.5 L501.75 702.5 L502.00 702.5 L502.25 702.5 L502.50 702.5 L502.75 702.5 L503.00 702.5 L503.25 702.5 L503.50 702.5 L503.75 702.5 L504.00 702.5 L504.25 702.5 L504.50 702.5 L504.75 702.5 L505.00 702.5 L505.25 702.5 L505.50 702.5 L505.75 702.5 L506.00 702.5 L506.25 702.5 L506.50 702.5 L506.75 702.5 L507.00 702.5 L507.25 702.5 L507.50 702.5 L507.75 702.5 L508.00 702.5 L508.25 702.5 L508.50 702.5 L508.75 702.5 L509.00 702.5 L509.25 702.5 L509.50 702.5 L509.75 702.5 L510.00 702.5 L510.25 702.5 L510.50 702.5 L510.75 702.5 L511.00 702.5 L511.25 702.6 L511.50 702.6 L511.75 702.6 L512.00 702.6 L512.25 702.6 L512.50 702.6 L512.75 702.6 L513.00 702.6 L513.25 702.6 L513.50 702.6 L513.75 702.6 L514.00 702.6 L514.25 702.6 L514.50 702.6 L514.75 702.6 L515.00 702.6 L515.25 702.6 L515.50 702.6 L515.75 702.6 L516.00 702.6 L516.25 702.6 L516.50 702.6 L516.75 702.6 L517.00 702.6 L517.25 702.6 L517.50 702.6 L517.75 702.6 L518.00 702.6 L518.25 702.6 L518.50 702.6 L518.75 702.6 L519.00 702.6 L519.25 702.6 L519.50 702.6 L519.75 702.6 L520.00 702.6 L520.25 702.6 L520.50 702.6 L520.75 702.6 L521.00 702.6 L521.25 702.6 L521.50 702.6 L521.75 702.6 L522.00 702.6 L522.25 702.6 L522.50 702.6 L522.75 702.6 L523.00 702.6 L523.25 702.6 L523.50 702.6 L523.75 702.6 L524.00 702.6 L524.25 702.6 L524.50 702.6 L524.75 702.6 L525.00 702.6 L525.25 702.6 L525.50 702.6 L525.75 702.6 L526.00 702.6 L526.25 702.6 L526.50 702.6 L526.75 702.6 L527.00 702.6 L527.25 702.6 L527.50 702.6 L527.75 702.6 L528.00 702.6 L528.25 702.6 L528.50 702.6 L528.75 702.6 L529.00 702.6 L529.25 702.6 L529.50 702.6 L529.75 702.6 L530.00 702.6 L530.25 702.6 L530.50 702.6 L530.75 702.6 L531.00 702.6 L531.25 702.6 L531.50 702.6 L531.75 702.6 L532.00 702.6 L532.25 702.6 L532.50 702.6 L532.75 702.6 L533.00 702.6 L533.25 702.6 L533.50 702.6 L533.75 702.6 L534.00 702.6 L534.25 702.6 L534.50 702.6 L534.75 702.6 L535.00 702.6 L535.25 702.6 L535.50 702.6 L535.75 702.6 L536.00 702.6 L536.25 702.6 L536.50 702.6 L536.75 702.6 L537.00 702.6 L537.25 702.6 L537.50 702.6 L537.75 702.6 L538.00 702.6 L538.25 702.6 L538.50 702.6 L538.75 702.6 L539.00 702.6 L539.25 702.6 L539.50 702.6 L539.75 702.6 L540.00 702.6 L540.25 702.6 L540.50 702.6 L540.75 702.6 L541.00 702.6 L541.25 702.6 L541.50 702.6 L541.75 702.6 L542.00 702.6 L542.25 702.6 L542.50 702.6 L542.75 702.6 L543.00 702.6 L543.25 702.6 L543.50 702.6 L543.75 702.6 L544.00 702.6 L544.25 702.6 L544.50 702.6 L544.75 702.6 L545.00 702.6 L545.25 702.6 L545.50 702.6 L545.75 702.6 L546.00 702.6 L546.25 702.6 L546.50 702.6 L546.75 702.6 L547.00 702.6 L547.25 702.6 L547.50 702.6 L547.75 702.6 L548.00 702.6 L548.25 702.6 L548.50 702.6 L548.75 702.6 L549.00 702.6 L549.25 702.6 L549.50 702.6 L549.75 702.6 L550.00 702.6 L550.25 702.6 L550.50 702.6 L550.75 702.6 L551.00 702.6 L551.25 702.6 L551.50 702.6 L551.75 702.6 L552.00 702.6 L552.25 702.6 L552.50 702.6 L552.75 702.6 L553.00 702.6 L553.25 702.6 L553.50 702.6 L553.75 702.6 L554.00 702.6 L554.25 702.6 L554.50 702.6 L554.75 702.6 L555.00 702.6 L555.25 702.6 L555.50 702.6 L555.75 702.6 L556.00 702.6 L556.25 702.6 L556.50 702.6 L556.75 702.6 L557.00 702.6 L557.25 702.6 L557.50 702.6 L557.75 702.6 L558.00 702.6 L558.25 702.6 L558.50 702.6 L558.75 702.6 L559.00 702.6 L559.25 702.6 L559.50 702.6 L559.75 702.6 L560.00 702.7 L560.25 702.7 L560.50 702.7 L560.75 702.7 L561.00 702.7 L561.25 702.7 L561.50 702.7 L561.75 702.7 L562.00 702.7 L562.25 702.7 L562.50 702.7 L562.75 702.7 L563.00 702.7 L563.25 702.7 L563.50 702.7 L563.75 702.7 L564.00 702.7 L564.25 702.7 L564.50 702.7 L564.75 702.7 L565.00 702.7 L565.25 702.7 L565.50 702.7 L565.75 702.7 L566.00 702.7 L566.25 702.7 L566.50 702.7 L566.75 702.7 L567.00 702.7 L567.25 702.7 L567.50 702.7 L567.75 702.7 L568.00 702.7 L568.25 702.7 L568.50 702.7 L568.75 702.7 L569.00 702.7 L569.25 702.7 L569.50 702.7 L569.75 702.7 L570.00 702.7 L570.25 702.7 L570.50 702.7 L570.75 702.7 L571.00 702.7 L571.25 702.7 L571.50 702.7 L571.75 702.7 L572.00 702.7 L572.25 702.7 L572.50 702.7 L572.75 702.7 L573.00 702.7 L573.25 702.7 L573.50 702.7 L573.75 702.7 L574.00 702.7 L574.25 702.7 L574.50 702.7 L574.75 702.7 L575.00 702.7 L575.25 702.7 L575.50 702.7 L575.75 702.7 L576.00 702.7 L576.25 702.7 L576.50 702.7 L576.75 702.7 L577.00 702.7 L577.25 702.7 L577.50 702.7 L577.75 702.7 L578.00 702.7 L578.25 702.7 L578.50 702.7 L578.75 702.7 L579.00 702.7 L579.25 702.7 L579.50 702.7 L579.75 702.7 L580.00 702.7 L580.25 702.7 L580.50 702.7 L580.75 702.7 L581.00 702.7 L581.25 702.7 L581.50 702.7 L581.75 702.7 L582.00 702.7 L582.25 702.7 L582.50 702.7 L582.75 702.7 L583.00 702.7 L583.25 702.7 L583.50 702.7 L583.75 702.7 L584.00 702.7 L584.25 702.7 L584.50 702.7 L584.75 702.7 L585.00 702.7 L585.25 702.7 L585.50 702.7 L585.75 702.7 L586.00 702.7 L586.25 702.7 L586.50 702.7 L586.75 702.7 L587.00 702.7 L587.25 702.7 L587.50 702.7 L587.75 702.7 L588.00 702.7 L588.25 702.7 L588.50 702.7 L588.75 702.7 L589.00 702.7 L589.25 702.7 L589.50 702.7 L589.75 702.7 L590.00 702.7 L590.25 702.7 L590.50 702.7 L590.75 702.7 L591.00 702.7 L591.25 702.7 L591.50 702.7 L591.75 702.7 L592.00 702.7 L592.25 702.7 L592.50 702.7 L592.75 702.7 L593.00 702.7 L593.25 702.7 L593.50 702.7 L593.75 702.7 L594.00 702.7 L594.25 702.7 L594.50 702.7 L594.75 702.7 L595.00 702.7 L595.25 702.7 L595.50 702.7 L595.75 702.7 L596.00 702.7 L596.25 702.7 L596.50 702.7 L596.75 702.7 L597.00 702.7 L597.25 702.7 L597.50 702.7 L597.75 702.7 L598.00 702.7 L598.25 702.7 L598.50 702.7 L598.75 702.7 L599.00 702.7 L599.25 702.7 L599.50 702.7 L599.75 702.7 L600.00 702.7 L600.25 702.7 L600.50 702.7 L600.75 702.7 L601.00 702.7 L601.25 702.7 L601.50 702.7 L601.75 702.7 L602.00 702.7 L602.25 702.7 L602.50 702.7 L602.75 702.7 L603.00 702.7 L603.25 702.7 L603.50 702.7 L603.75 702.7 L604.00 702.7 L604.25 702.6 L604.50 702.6 L604.75 702.6 L605.00 702.6 L605.25 702.6 L605.50 702.6 L605.75 702.6 L606.00 702.6 L606.25 702.6 L606.50 702.6 L606.75 702.6 L607.00 702.6 L607.25 702.6 L607.50 702.6 L607.75 702.6 L608.00 702.6 L608.25 702.6 L608.50 702.6 L608.75 702.6 L609.00 702.6 L609.25 702.6 L609.50 702.6 L609.75 702.6 L610.00 702.6 L610.25 702.6 L610.50 702.6 L610.75 702.6 L611.00 702.6 L611.25 702.6 L611.50 702.6 L611.75 702.6 L612.00 702.6 L612.25 702.5 L612.50 702.5 L612.75 702.5 L613.00 702.5 L613.25 702.5 L613.50 702.5 L613.75 702.5 L614.00 702.5 L614.25 702.5 L614.50 702.5 L614.75 702.5 L615.00 702.5 L615.25 702.5 L615.50 702.5 L615.75 702.5 L616.00 702.5 L616.25 702.5 L616.50 702.5 L616.75 702.5 L617.00 702.5 L617.25 702.5 L617.50 702.5 L617.75 702.5 L618.00 702.5 L618.25 702.5 L618.50 702.5 L618.75 702.5 L619.00 702.5 L619.25 702.5 L619.50 702.5 L619.75 702.5 L620.00 702.5 L620.25 702.4 L620.50 702.4 L620.75 702.4 L621.00 702.4 L621.25 702.4 L621.50 702.4 L621.75 702.4 L622.00 702.4 L622.25 702.4 L622.50 702.4 L622.75 702.4 L623.00 702.4 L623.25 702.4 L623.50 702.4 L623.75 702.4 L624.00 702.4 L624.25 702.4 L624.50 702.4 L624.75 702.4 L625.00 702.4 L625.25 702.4 L625.50 702.4 L625.75 702.4 L626.00 702.4 L626.25 702.4 L626.50 702.4 L626.75 702.4 L627.00 702.4 L627.25 702.4 L627.50 702.4 L627.75 702.4 L628.00 702.3 L628.25 702.3 L628.50 702.3 L628.75 702.3 L629.00 702.3 L629.25 702.3 L629.50 702.3 L629.75 702.3 L630.00 702.3 L630.25 702.3 L630.50 702.3 L630.75 702.3 L631.00 702.3 L631.25 702.3 L631.50 702.3 L631.75 702.3 L632.00 702.3 L632.25 702.3 L632.50 702.3 L632.75 702.3 L633.00 702.3 L633.25 702.3 L633.50 702.3 L633.75 702.3 L634.00 702.3 L634.25 702.3 L634.50 702.3 L634.75 702.3 L635.00 702.3 L635.25 702.3 L635.50 702.3 L635.75 702.2 L636.00 702.2 L636.25 702.2 L636.50 702.2 L636.75 702.2 L637.00 702.2 L637.25 702.2 L637.50 702.2 L637.75 702.2 L638.00 702.2 L638.25 702.2 L638.50 702.2 L638.75 702.2 L639.00 702.2 L639.25 702.2 L639.50 702.2 L639.75 702.2 L640.00 702.2 L640.25 702.2 L640.50 702.2 L640.75 702.2 L641.00 702.2 L641.25 702.1 L641.50 702.1 L641.75 702.1 L642.00 702.1 L642.25 702.1 L642.50 702.1 L642.75 702.1 L643.00 702.1 L643.25 702.1 L643.50 702.1 L643.75 702.1 L644.00 702.0 L644.25 702.0 L644.50 702.0 L644.75 702.0 L645.00 702.0 L645.25 702.0 L645.50 702.0 L645.75 702.0 L646.00 702.0 L646.25 702.0 L646.50 702.0 L646.75 701.9 L647.00 701.9 L647.25 701.9 L647.50 701.9 L647.75 701.9 L648.00 701.9 L648.25 701.9 L648.50 701.9 L648.75 701.9 L649.00 701.9 L649.25 701.9 L649.50 701.8 L649.75 701.8 L650.00 701.8 L650.25 701.8 L650.50 701.8 L650.75 701.8 L651.00 701.8 L651.25 701.8 L651.50 701.8 L651.75 701.8 L652.00 701.7 L652.25 701.7 L652.50 701.7 L652.75 701.7 L653.00 701.7 L653.25 701.7 L653.50 701.7 L653.75 701.7 L654.00 701.7 L654.25 701.7 L654.50 701.6 L654.75 701.6 L655.00 701.6 L655.25 701.6 L655.50 701.6 L655.75 701.6 L656.00 701.6 L656.25 701.6 L656.50 701.6 L656.75 701.6 L657.00 701.5 L657.25 701.5 L657.50 701.5 L657.75 701.5 L658.00 701.5 L658.25 701.5 L658.50 701.5 L658.75 701.5 L659.00 701.5 L659.25 701.4 L659.50 701.4 L659.75 701.4 L660.00 701.4 L660.25 701.4 L660.50 701.4 L660.75 701.4 L661.00 701.3 L661.25 701.3 L661.50 701.3 L661.75 701.3 L662.00 701.3 L662.25 701.3 L662.50 701.2 L662.75 701.2 L663.00 701.2 L663.25 701.1 L663.50 701.1 L663.75 701.0 L664.00 701.0 L664.25 700.9 L664.50 700.8 L664.75 700.7 L665.00 700.6 L665.25 700.5 L665.50 700.4 L665.75 700.3 L666.00 700.1 L666.25 700.0 L666.50 699.8 L666.75 699.7 L667.00 699.6 L667.25 699.4 L667.50 699.3 L667.75 699.3 L668.00 699.3 L668.25 699.3 L668.50 699.3 L668.75 699.4 L669.00 699.5 L669.25 699.6 L669.50 699.7 L669.75 699.9 L670.00 700.0 L670.25 700.1 L670.50 700.2 L670.75 700.3 L671.00 700.4 L671.25 700.5 L671.50 700.6 L671.75 700.7 L672.00 700.7 L672.25 700.7 L672.50 700.8 L672.75 700.8 L673.00 700.8 L673.25 700.8 L673.50 700.8 L673.75 700.9 L674.00 700.9 L674.25 700.9 L674.50 700.8 L674.75 700.8 L675.00 700.8 L675.25 700.8 L675.50 700.8 L675.75 700.8 L676.00 700.8 L676.25 700.8 L676.50 700.8 L676.75 700.8 L677.00 700.8 L677.25 700.7 L677.50 700.7 L677.75 700.7 L678.00 700.7 L678.25 700.7 L678.50 700.7 L678.75 700.6 L679.00 700.6 L679.25 700.6 L679.50 700.6 L679.75 700.5 L680.00 700.5 L680.25 700.4 L680.50 700.3 L680.75 700.2 L681.00 700.1 L681.25 699.9 L681.50 699.7 L681.75 699.4 L682.00 699.0 L682.25 698.6 L682.50 698.1 L682.75 697.5 L683.00 696.9 L683.25 696.3 L683.50 695.7 L683.75 695.3 L684.00 694.9 L684.25 694.8 L684.50 695.0 L684.75 695.3 L685.00 695.7 L685.25 696.2 L685.50 696.8 L685.75 697.2 L686.00 697.6 L686.25 697.8 L686.50 697.9 L686.75 697.9 L687.00 697.7 L687.25 697.3 L687.50 696.8 L687.75 696.2 L688.00 695.4 L688.25 694.6 L688.50 693.8 L688.75 693.1 L689.00 692.6 L689.25 692.4 L689.50 692.5 L689.75 692.9 L690.00 693.5 L690.25 694.3 L690.50 695.1 L690.75 695.9 L691.00 696.7 L691.25 697.3 L691.50 697.8 L691.75 698.1 L692.00 698.3 L692.25 698.4 L692.50 698.3 L692.75 698.1 L693.00 697.8 L693.25 697.4 L693.50 697.1 L693.75 696.9 L694.00 696.8 L694.25 696.9 L694.50 697.1 L694.75 697.5 L695.00 697.9 L695.25 698.3 L695.50 698.5 L695.75 698.7 L696.00 698.8 L696.25 698.8 L696.50 698.6 L696.75 698.2 L697.00 697.6 L697.25 696.8 L697.50 695.9 L697.75 694.7 L698.00 693.6 L698.25 692.5 L698.50 691.6 L698.75 691.2 L699.00 691.3 L699.25 692.0 L699.50 692.9 L699.75 694.0 L700.00 695.1 L700.25 696.0 L700.50 696.8 L700.75 697.3 L701.00 697.5 L701.25 697.3 L701.50 696.6 L701.75 695.4 L702.00 693.5 L702.25 690.9 L702.50 687.9 L702.75 684.8 L703.00 682.5 L703.25 681.9 L703.50 683.3 L703.75 686.0 L704.00 689.2 L704.25 692.2 L704.50 694.6 L704.75 696.3 L705.00 697.5 L705.25 698.2 L705.50 698.6 L705.75 698.8 L706.00 698.9 L706.25 699.0 L706.50 698.9 L706.75 698.8 L707.00 698.6 L707.25 698.1 L707.50 697.3 L707.75 696.0 L708.00 693.9 L708.25 690.7 L708.50 686.4 L708.75 681.0 L709.00 675.0 L709.25 669.0 L709.50 664.2 L709.75 662.0 L710.00 663.0 L710.25 666.8 L710.50 672.5 L710.75 678.6 L711.00 684.3 L711.25 689.0 L711.50 692.6 L711.75 695.1 L712.00 696.6 L712.25 697.5 L712.50 698.0 L712.75 698.1 L713.00 698.0 L713.25 697.7 L713.50 697.3 L713.75 696.8 L714.00 696.1 L714.25 695.5 L714.50 694.8 L714.75 694.4 L715.00 694.2 L715.25 694.3 L715.50 694.6 L715.75 695.2 L716.00 695.7 L716.25 696.2 L716.50 696.5 L716.75 696.6 L717.00 696.4 L717.25 696.0 L717.50 695.1 L717.75 694.0 L718.00 692.4 L718.25 690.5 L718.50 688.2 L718.75 685.8 L719.00 683.4 L719.25 681.2 L719.50 679.5 L719.75 678.7 L720.00 678.7 L720.25 679.2 L720.50 679.8 L720.75 680.1 L721.00 679.8 L721.25 678.8 L721.50 677.2 L721.75 675.1 L722.00 673.0 L722.25 671.5 L722.50 671.2 L722.75 672.5 L723.00 675.2 L723.25 678.6 L723.50 682.2 L723.75 685.6 L724.00 688.6 L724.25 690.9 L724.50 692.6 L724.75 693.7 L725.00 694.1 L725.25 694.2 L725.50 694.0 L725.75 693.8 L726.00 693.8 L726.25 694.2 L726.50 694.9 L726.75 695.7 L727.00 696.4 L727.25 697.1 L727.50 697.6 L727.75 697.9 L728.00 698.1 L728.25 698.1 L728.50 698.0 L728.75 697.8 L729.00 697.4 L729.25 696.9 L729.50 696.3 L729.75 695.5 L730.00 694.5 L730.25 693.3 L730.50 692.1 L730.75 690.6 L731.00 689.2 L731.25 687.7 L731.50 686.3 L731.75 685.1 L732.00 684.2 L732.25 683.9 L732.50 684.0 L732.75 684.6 L733.00 685.7 L733.25 687.0 L733.50 688.4 L733.75 689.8 L734.00 691.2 L734.25 692.4 L734.50 693.5 L734.75 694.4 L735.00 695.0 L735.25 695.4 L735.50 695.5 L735.75 695.3 L736.00 695.0 L736.25 694.4 L736.50 693.6 L736.75 692.6 L737.00 691.5 L737.25 690.3 L737.50 689.2 L737.75 688.3 L738.00 687.6 L738.25 687.3 L738.50 687.4 L738.75 688.0 L739.00 688.9 L739.25 690.0 L739.50 691.2 L739.75 692.4 L740.00 693.4 L740.25 694.3 L740.50 695.0 L740.75 695.5 L741.00 695.7 L741.25 695.7 L741.50 695.5 L741.75 695.2 L742.00 694.8 L742.25 694.6 L742.50 694.5 L742.75 694.8 L743.00 695.2 L743.25 695.8 L743.50 696.3 L743.75 696.8 L744.00 697.1 L744.25 697.2 L744.50 696.9 L744.75 696.3 L745.00 695.2 L745.25 693.6 L745.50 691.7 L745.75 689.6 L746.00 687.6 L746.25 686.3 L746.50 686.2 L746.75 687.4 L747.00 689.3 L747.25 691.5 L747.50 693.6 L747.75 695.4 L748.00 696.8 L748.25 697.8 L748.50 698.5 L748.75 699.0 L749.00 699.2 L749.25 699.4 L749.50 699.5 L749.75 699.6 L750.00 699.6 L750.25 699.6 L750.50 699.7 L750.75 699.6 L751.00 699.6 L751.25 699.5 L751.50 699.4 L751.75 699.3 L752.00 699.1 L752.25 698.8 L752.50 698.4 L752.75 697.9 L753.00 697.3 L753.25 696.5 L753.50 695.6 L753.75 694.6 L754.00 693.5 L754.25 692.4 L754.50 691.3 L754.75 690.5 L755.00 689.9 L755.25 689.8 L755.50 690.1 L755.75 690.7 L756.00 691.7 L756.25 692.7 L756.50 693.8 L756.75 694.9 L757.00 695.8 L757.25 696.6 L757.50 697.3 L757.75 697.8 L758.00 698.2 L758.25 698.3 L758.50 698.3 L758.75 698.2 L759.00 697.9 L759.25 697.4 L759.50 696.8 L759.75 696.1 L760.00 695.4 L760.25 694.8 L760.50 694.3 L760.75 694.2 L761.00 694.5 L761.25 695.0 L761.50 695.7 L761.75 696.4 L762.00 697.1 L762.25 697.7 L762.50 698.1 L762.75 698.5 L763.00 698.7 L763.25 698.7 L763.50 698.6 L763.75 698.3 L764.00 697.8 L764.25 696.9 L764.50 695.5 L764.75 693.6 L765.00 691.2 L765.25 688.3 L765.50 685.3 L765.75 682.7 L766.00 681.2 L766.25 681.3 L766.50 683.1 L766.75 685.8 L767.00 688.8 L767.25 691.6 L767.50 693.9 L767.75 695.6 L768.00 696.9 L768.25 697.6 L768.50 698.1 L768.75 698.3 L769.00 698.3 L769.25 698.1 L769.50 697.8 L769.75 697.4 L770.00 696.7 L770.25 695.9 L770.50 694.9 L770.75 693.7 L771.00 692.4 L771.25 690.9 L771.50 689.4 L771.75 687.9 L772.00 686.6 L772.25 685.7 L772.50 685.3 L772.75 685.5 L773.00 686.2 L773.25 687.1 L773.50 688.2 L773.75 689.1 L774.00 689.8 L774.25 690.1 L774.50 689.9 L774.75 689.2 L775.00 688.0 L775.25 686.4 L775.50 684.5 L775.75 682.6 L776.00 680.9 L776.25 680.0 L776.50 680.0 L776.75 681.1 L777.00 683.0 L777.25 685.3 L777.50 687.8 L777.75 690.2 L778.00 692.3 L778.25 694.1 L778.50 695.6 L778.75 696.7 L779.00 697.6 L779.25 698.2 L779.50 698.7 L779.75 699.0 L780.00 699.2 L780.25 699.3 L780.50 699.4 L780.75 699.5 L781.00 699.5 L781.25 699.5 L781.50 699.5 L781.75 699.4 L782.00 699.3 L782.25 699.0 L782.50 698.6 L782.75 697.9 L783.00 697.0 L783.25 695.7 L783.50 694.1 L783.75 692.3 L784.00 690.5 L784.25 689.1 L784.50 688.5 L784.75 689.1 L785.00 690.5 L785.25 692.3 L785.50 694.2 L785.75 695.8 L786.00 697.2 L786.25 698.1 L786.50 698.8 L786.75 699.3 L787.00 699.6 L787.25 699.8 L787.50 699.9 L787.75 700.0 L788.00 700.0 L788.25 700.0 L788.50 700.1 L788.75 700.1 L789.00 700.1 L789.25 700.1 L789.50 700.1 L789.75 700.1 L790.00 700.1 L790.25 700.1 L790.50 700.1 L790.75 700.1 L791.00 700.1 L791.25 700.0 L791.50 700.0 L791.75 700.0 L792.00 699.9 L792.25 699.8 L792.50 699.7 L792.75 699.5 L793.00 699.3 L793.25 699.0 L793.50 698.5 L793.75 697.9 L794.00 697.2 L794.25 696.2 L794.50 695.1 L794.75 693.8 L795.00 692.3 L795.25 690.8 L795.50 689.4 L795.75 688.1 L796.00 687.3 L796.25 687.1 L796.50 687.5 L796.75 688.5 L797.00 689.7 L797.25 691.2 L797.50 692.6 L797.75 693.9 L798.00 695.1 L798.25 696.0 L798.50 696.8 L798.75 697.3 L799.00 697.5 L799.25 697.4 L799.50 697.0 L799.75 696.1 L800.00 694.7 L800.25 692.5 L800.50 689.5 L800.75 685.9 L801.00 681.8 L801.25 678.0 L801.50 675.2 L801.75 674.5 L802.00 676.2 L802.25 679.5 L802.50 683.6 L802.75 687.6 L803.00 691.0 L803.25 693.8 L803.50 695.8 L803.75 697.2 L804.00 698.1 L804.25 698.7 L804.50 699.0 L804.75 699.2 L805.00 699.3 L805.25 699.4 L805.50 699.4 L805.75 699.4 L806.00 699.2 L806.25 699.0 L806.50 698.7 L806.75 698.2 L807.00 697.5 L807.25 696.7 L807.50 695.8 L807.75 694.8 L808.00 693.8 L808.25 693.0 L808.50 692.6 L808.75 692.6 L809.00 693.2 L809.25 694.1 L809.50 695.1 L809.75 696.1 L810.00 697.1 L810.25 697.9 L810.50 698.5 L810.75 699.0 L811.00 699.4 L811.25 699.6 L811.50 699.8 L811.75 699.9 L812.00 700.0 L812.25 700.0 L812.50 700.0 L812.75 700.1 L813.00 700.0 L813.25 700.0 L813.50 700.0 L813.75 699.9 L814.00 699.8 L814.25 699.7 L814.50 699.5 L814.75 699.3 L815.00 699.0 L815.25 698.6 L815.50 698.2 L815.75 697.7 L816.00 697.2 L816.25 696.6 L816.50 696.1 L816.75 695.7 L817.00 695.4 L817.25 695.2 L817.50 695.1 L817.75 695.2 L818.00 695.2 L818.25 695.1 L818.50 694.9 L818.75 694.4 L819.00 693.6 L819.25 692.4 L819.50 691.0 L819.75 689.3 L820.00 687.5 L820.25 685.9 L820.50 684.6 L820.75 684.1 L821.00 684.4 L821.25 685.6 L821.50 687.3 L821.75 689.3 L822.00 691.2 L822.25 693.1 L822.50 694.7 L822.75 696.1 L823.00 697.2 L823.25 698.0 L823.50 698.6 L823.75 699.0 L824.00 699.3 L824.25 699.4 L824.50 699.5 L824.75 699.5 L825.00 699.5 L825.25 699.4 L825.50 699.3 L825.75 699.1 L826.00 699.0 L826.25 698.8 L826.50 698.7 L826.75 698.6 L827.00 698.6 L827.25 698.6 L827.50 698.8 L827.75 698.9 L828.00 699.1 L828.25 699.3 L828.50 699.5 L828.75 699.7 L829.00 699.9 L829.25 700.0 L829.50 700.1 L829.75 700.2 L830.00 700.3 L830.25 700.3 L830.50 700.3 L830.75 700.3 L831.00 700.3 L831.25 700.3 L831.50 700.2 L831.75 700.1 L832.00 699.9 L832.25 699.6 L832.50 699.2 L832.75 698.7 L833.00 698.0 L833.25 697.3 L833.50 696.5 L833.75 695.7 L834.00 695.2 L834.25 695.1 L834.50 695.4 L834.75 696.0 L835.00 696.8 L835.25 697.6 L835.50 698.3 L835.75 698.9 L836.00 699.4 L836.25 699.8 L836.50 700.0 L836.75 700.2 L837.00 700.3 L837.25 700.3 L837.50 700.4 L837.75 700.4 L838.00 700.4 L838.25 700.4 L838.50 700.4 L838.75 700.3 L839.00 700.3 L839.25 700.2 L839.50 700.1 L839.75 700.0 L840.00 699.8 L840.25 699.4 L840.50 699.0 L840.75 698.4 L841.00 697.6 L841.25 696.6 L841.50 695.4 L841.75 694.2 L842.00 693.0 L842.25 692.1 L842.50 691.5 L842.75 691.6 L843.00 692.2 L843.25 693.3 L843.50 694.5 L843.75 695.7 L844.00 696.8 L844.25 697.8 L844.50 698.5 L844.75 699.1 L845.00 699.6 L845.25 699.9 L845.50 700.1 L845.75 700.2 L846.00 700.3 L846.25 700.3 L846.50 700.4 L846.75 700.4 L847.00 700.4 L847.25 700.3 L847.50 700.3 L847.75 700.2 L848.00 700.1 L848.25 700.0 L848.50 699.9 L848.75 699.7 L849.00 699.6 L849.25 699.4 L849.50 699.3 L849.75 699.2 L850.00 699.2 L850.25 699.2 L850.50 699.3 L850.75 699.5 L851.00 699.6 L851.25 699.8 L851.50 700.0 L851.75 700.1 L852.00 700.3 L852.25 700.4 L852.50 700.5 L852.75 700.6 L853.00 700.6 L853.25 700.7 L853.50 700.7 L853.75 700.8 L854.00 700.8 L854.25 700.8 L854.50 700.8 L854.75 700.8 L855.00 700.8 L855.25 700.8 L855.50 700.9 L855.75 700.9 L856.00 700.9 L856.25 700.9 L856.50 700.9 L856.75 700.9 L857.00 700.9 L857.25 700.9 L857.50 700.9 L857.75 700.9 L858.00 700.9 L858.25 700.9 L858.50 700.9 L858.75 700.9 L859.00 700.9 L859.25 700.9 L859.50 700.9 L859.75 700.9 L860.00 700.9 L860.25 700.9 L860.50 700.8 L860.75 700.8 L861.00 700.7 L861.25 700.6 L861.50 700.5 L861.75 700.4 L862.00 700.1 L862.25 699.9 L862.50 699.6 L862.75 699.3 L863.00 699.0 L863.25 698.8 L863.50 698.7 L863.75 698.8 L864.00 699.0 L864.25 699.3 L864.50 699.6 L864.75 699.9 L865.00 700.2 L865.25 700.4 L865.50 700.5 L865.75 700.7 L866.00 700.8 L866.25 700.8 L866.50 700.8 L866.75 700.9 L867.00 700.9 L867.25 700.8 L867.50 700.8 L867.75 700.7 L868.00 700.6 L868.25 700.4 L868.50 700.2 L868.75 699.9 L869.00 699.6 L869.25 699.3 L869.50 699.0 L869.75 698.8 L870.00 698.8 L870.25 698.8 L870.50 699.1 L870.75 699.3 L871.00 699.7 L871.25 700.0 L871.50 700.3 L871.75 700.5 L872.00 700.7 L872.25 700.8 L872.50 700.9 L872.75 701.0 L873.00 701.0 L873.25 701.1 L873.50 701.1 L873.75 701.1 L874.00 701.1 L874.25 701.1 L874.50 701.2 L874.75 701.2 L875.00 701.2 L875.25 701.2 L875.50 701.2 L875.75 701.2 L876.00 701.2 L876.25 701.2 L876.50 701.2 L876.75 701.2 L877.00 701.2 L877.25 701.2 L877.50 701.2 L877.75 701.2 L878.00 701.3 L878.25 701.3 L878.50 701.3 L878.75 701.3 L879.00 701.3 L879.25 701.3 L879.50 701.3 L879.75 701.3 L880.00 701.3 L880.25 701.3 L880.50 701.3 L880.75 701.3 L881.00 701.3 L881.25 701.3 L881.50 701.3 L881.75 701.3 L882.00 701.3 L882.25 701.3 L882.50 701.3 L882.75 701.3 L883.00 701.3 L883.25 701.3 L883.50 701.3 L883.75 701.3 L884.00 701.3 L884.25 701.4 L884.50 701.4 L884.75 701.4 L885.00 701.4 L885.25 701.4 L885.50 701.4 L885.75 701.4 L886.00 701.4 L886.25 701.4 L886.50 701.4 L886.75 701.4 L887.00 701.4 L887.25 701.4 L887.50 701.4 L887.75 701.4 L888.00 701.4 L888.25 701.4 L888.50 701.4 L888.75 701.4 L889.00 701.4 L889.25 701.4 L889.50 701.4 L889.75 701.4 L890.00 701.4 L890.25 701.4 L890.50 701.4 L890.75 701.4 L891.00 701.4 L891.25 701.3 L891.50 701.3 L891.75 701.3 L892.00 701.2 L892.25 701.1 L892.50 701.0 L892.75 700.8 L893.00 700.6 L893.25 700.4 L893.50 700.2 L893.75 700.0 L894.00 699.8 L894.25 699.6 L894.50 699.6 L894.75 699.6 L895.00 699.8 L895.25 700.0 L895.50 700.2 L895.75 700.5 L896.00 700.7 L896.25 700.9 L896.50 701.0 L896.75 701.2 L897.00 701.3 L897.25 701.3 L897.50 701.4 L897.75 701.4 L898.00 701.4 L898.25 701.5 L898.50 701.5 L898.75 701.5 L899.00 701.5 L899.25 701.5 L899.50 701.5 L899.75 701.5 L900.00 701.5 L900.25 701.5 L900.50 701.5 L900.75 701.5 L901.00 701.5 L901.25 701.5 L901.50 701.5 L901.75 701.5 L902.00 701.4 L902.25 701.4 L902.50 701.4 L902.75 701.3 L903.00 701.2 L903.25 701.1 L903.50 700.9 L903.75 700.8 L904.00 700.6 L904.25 700.3 L904.50 700.2 L904.75 700.0 L905.00 700.0 L905.25 700.0 L905.50 700.1 L905.75 700.3 L906.00 700.5 L906.25 700.7 L906.50 700.9 L906.75 701.1 L907.00 701.2 L907.25 701.3 L907.50 701.3 L907.75 701.4 L908.00 701.4 L908.25 701.4 L908.50 701.4 L908.75 701.4 L909.00 701.4 L909.25 701.4 L909.50 701.4 L909.75 701.4 L910.00 701.4 L910.25 701.4 L910.50 701.3 L910.75 701.3 L911.00 701.2 L911.25 701.0 L911.50 700.9 L911.75 700.7 L912.00 700.5 L912.25 700.3 L912.50 700.1 L912.75 700.0 L913.00 700.0 L913.25 700.0 L913.50 700.1 L913.75 700.3 L914.00 700.5 L914.25 700.7 L914.50 700.9 L914.75 701.0 L915.00 701.1 L915.25 701.2 L915.50 701.3 L915.75 701.3 L916.00 701.3 L916.25 701.3 L916.50 701.3 L916.75 701.3 L917.00 701.3 L917.25 701.3 L917.50 701.3 L917.75 701.3 L918.00 701.2 L918.25 701.1 L918.50 701.0 L918.75 700.8 L919.00 700.6 L919.25 700.4 L919.50 700.1 L919.75 699.8 L920.00 699.5 L920.25 699.3 L920.50 699.3 L920.75 699.3 L921.00 699.5 L921.25 699.8 L921.50 700.1 L921.75 700.3 L922.00 700.6 L922.25 700.8 L922.50 701.0 L922.75 701.1 L923.00 701.2 L923.25 701.2 L923.50 701.3 L923.75 701.3 L924.00 701.3 L924.25 701.3 L924.50 701.3 L924.75 701.3 L925.00 701.3 L925.25 701.3 L925.50 701.3 L925.75 701.3 L926.00 701.3 L926.25 701.3 L926.50 701.3 L926.75 701.2 L927.00 701.2 L927.25 701.2 L927.50 701.1 L927.75 701.0 L928.00 700.9 L928.25 700.7 L928.50 700.5 L928.75 700.3 L929.00 700.0 L929.25 699.7 L929.50 699.3 L929.75 699.0 L930.00 698.7 L930.25 698.5 L930.50 698.5 L930.75 698.5 L931.00 698.7 L931.25 699.0 L931.50 699.3 L931.75 699.7 L932.00 700.0 L932.25 700.3 L932.50 700.5 L932.75 700.7 L933.00 700.8 L933.25 701.0 L933.50 701.0 L933.75 701.1 L934.00 701.2 L934.25 701.2 L934.50 701.2 L934.75 701.2 L935.00 701.2 L935.25 701.2 L935.50 701.2 L935.75 701.1 L936.00 701.1 L936.25 701.0 L936.50 700.9 L936.75 700.7 L937.00 700.5 L937.25 700.3 L937.50 700.0 L937.75 699.7 L938.00 699.5 L938.25 699.3 L938.50 699.2 L938.75 699.3 L939.00 699.5 L939.25 699.7 L939.50 700.0 L939.75 700.3 L940.00 700.5 L940.25 700.7 L940.50 700.9 L940.75 701.0 L941.00 701.1 L941.25 701.1 L941.50 701.2 L941.75 701.2 L942.00 701.2 L942.25 701.2 L942.50 701.2 L942.75 701.2 L943.00 701.2 L943.25 701.1 L943.50 701.1 L943.75 701.0 L944.00 701.0 L944.25 700.8 L944.50 700.7 L944.75 700.5 L945.00 700.3 L945.25 700.1 L945.50 699.9 L945.75 699.8 L946.00 699.7 L946.25 699.8 L946.50 699.9 L946.75 700.1 L947.00 700.3 L947.25 700.5 L947.50 700.7 L947.75 700.8 L948.00 701.0 L948.25 701.0 L948.50 701.1 L948.75 701.1 L949.00 701.2 L949.25 701.2 L949.50 701.2 L949.75 701.2 L950.00 701.2 L950.25 701.2 L950.50 701.2 L950.75 701.2 L951.00 701.2 L951.25 701.2 L951.50 701.2 L951.75 701.2 L952.00 701.2 L952.25 701.2 L952.50 701.2 L952.75 701.2 L953.00 701.2 L953.25 701.2 L953.50 701.2 L953.75 701.2 L954.00 701.2 L954.25 701.2 L954.50 701.2 L954.75 701.2 L955.00 701.2 L955.25 701.2 L955.50 701.2 L955.75 701.2 L956.00 701.2 L956.25 701.2 L956.50 701.2 L956.75 701.2 L957.00 701.2 L957.25 701.2 L957.50 701.2 L957.75 701.2 L958.00 701.1 L958.25 701.1 L958.50 701.1 L958.75 701.1 L959.00 701.1 L959.25 701.1 L959.50 701.1 L959.75 701.1 L960.00 701.0 L960.25 701.0 L960.50 700.9 L960.75 700.9 L961.00 700.8 L961.25 700.7 L961.50 700.6 L961.75 700.4 L962.00 700.2 L962.25 699.9 L962.50 699.5 L962.75 699.1 L963.00 698.5 L963.25 697.9 L963.50 697.3 L963.75 696.8 L964.00 696.4 L964.25 696.3 L964.50 696.5 L964.75 696.8 L965.00 697.3 L965.25 697.9 L965.50 698.4 L965.75 698.8 L966.00 699.1 L966.25 699.4 L966.50 699.6 L966.75 699.7 L967.00 699.7 L967.25 699.7 L967.50 699.7 L967.75 699.7 L968.00 699.7 L968.25 699.6 L968.50 699.5 L968.75 699.5 L969.00 699.4 L969.25 699.3 L969.50 699.3 L969.75 699.2 L970.00 699.1 L970.25 699.0 L970.50 698.9 L970.75 698.8 L971.00 698.8 L971.25 698.7 L971.50 698.6 L971.75 698.5 L972.00 698.5 L972.25 698.4 L972.50 698.4 L972.75 698.3 L973.00 698.2 L973.25 698.2 L973.50 698.1 L973.75 698.0 L974.00 697.8 L974.25 697.7 L974.50 697.5 L974.75 697.3 L975.00 697.1 L975.25 696.9 L975.50 696.7 L975.75 696.4 L976.00 696.1 L976.25 695.3 L976.50 693.3 L976.75 688.7 L977.00 679.3 L977.25 661.9 L977.50 634.6 L977.75 597.5 L978.00 555.8 L978.25 518.8 L978.50 497.6 L978.75 500.1 L979.00 525.2 L979.25 563.9 L979.50 605.2 L979.75 640.3 L980.00 665.3 L980.25 680.4 L980.50 688.0 L980.75 691.1 L981.00 691.7 L981.25 691.0 L981.50 689.8 L981.75 688.2 L982.00 686.5 L982.25 684.8 L982.50 683.2 L982.75 681.9 L983.00 681.1 L983.25 680.9 L983.50 681.3 L983.75 682.3 L984.00 683.6 L984.25 685.1 L984.50 686.7 L984.75 688.2 L985.00 689.6 L985.25 690.7 L985.50 691.6 L985.75 692.2 L986.00 692.5 L986.25 692.7 L986.50 692.7 L986.75 692.5 L987.00 692.3 L987.25 692.0 L987.50 691.8 L987.75 691.7 L988.00 691.7 L988.25 691.8 L988.50 692.1 L988.75 692.6 L989.00 693.1 L989.25 693.6 L989.50 694.2 L989.75 694.7 L990.00 695.2 L990.25 695.5 L990.50 695.7 L990.75 695.8 L991.00 695.6 L991.25 695.1 L991.50 694.4 L991.75 693.3 L992.00 691.9 L992.25 690.2 L992.50 688.4 L992.75 686.5 L993.00 684.8 L993.25 683.6 L993.50 683.2 L993.75 683.7 L994.00 685.0 L994.25 686.8 L994.50 688.8 L994.75 690.8 L995.00 692.6 L995.25 694.2 L995.50 695.5 L995.75 696.5 L996.00 697.2 L996.25 697.7 L996.50 698.0 L996.75 698.1 L997.00 698.1 L997.25 698.0 L997.50 697.9 L997.75 697.6 L998.00 697.4 L998.25 697.1 L998.50 696.9 L998.75 696.8 L999.00 696.7 L999.25 696.8 L999.50 697.0 L999.75 697.3 L1000.00 697.6 L1000.25 697.9 L1000.50 698.3 L1000.75 698.6 L1001.00 698.8 L1001.25 699.0 L1001.50 699.2 L1001.75 699.3 L1002.00 699.4 L1002.25 699.5 L1002.50 699.5 L1002.75 699.6 L1003.00 699.6 L1003.25 699.6 L1003.50 699.5 L1003.75 699.5 L1004.00 699.4 L1004.25 699.3 L1004.50 699.1 L1004.75 698.9 L1005.00 698.5 L1005.25 698.0 L1005.50 697.4 L1005.75 696.5 L1006.00 695.3 L1006.25 693.9 L1006.50 692.3 L1006.75 690.6 L1007.00 688.7 L1007.25 687.1 L1007.50 685.8 L1007.75 685.3 L1008.00 685.5 L1008.25 686.5 L1008.50 688.0 L1008.75 689.7 L1009.00 691.5 L1009.25 693.1 L1009.50 694.6 L1009.75 695.8 L1010.00 696.7 L1010.25 697.4 L1010.50 697.9 L1010.75 698.2 L1011.00 698.3 L1011.25 698.4 L1011.50 698.3 L1011.75 698.1 L1012.00 697.7 L1012.25 697.1 L1012.50 696.4 L1012.75 695.3 L1013.00 694.0 L1013.25 692.4 L1013.50 690.6 L1013.75 688.6 L1014.00 686.7 L1014.25 685.0 L1014.50 683.8 L1014.75 683.5 L1015.00 684.0 L1015.25 685.1 L1015.50 686.6 L1015.75 688.1 L1016.00 689.3 L1016.25 689.9 L1016.50 689.6 L1016.75 688.2 L1017.00 685.4 L1017.25 681.5 L1017.50 676.8 L1017.75 672.4 L1018.00 669.8 L1018.25 670.1 L1018.50 673.4 L1018.75 678.1 L1019.00 682.9 L1019.25 687.0 L1019.50 690.1 L1019.75 692.0 L1020.00 693.0 L1020.25 693.3 L1020.50 693.2 L1020.75 692.8 L1021.00 692.5 L1021.25 692.2 L1021.50 692.1 L1021.75 692.3 L1022.00 692.7 L1022.25 693.2 L1022.50 693.8 L1022.75 694.3 L1023.00 694.7 L1023.25 694.8 L1023.50 694.5 L1023.75 693.5 L1024.00 691.7 L1024.25 688.8 L1024.50 684.8 L1024.75 679.6 L1025.00 673.6 L1025.25 667.3 L1025.50 661.4 L1025.75 657.2 L1026.00 655.6 L1026.25 657.1 L1026.50 661.2 L1026.75 666.9 L1027.00 673.0 L1027.25 678.6 L1027.50 683.4 L1027.75 686.8 L1028.00 689.0 L1028.25 690.1 L1028.50 690.2 L1028.75 689.8 L1029.00 689.1 L1029.25 688.5 L1029.50 688.1 L1029.75 688.4 L1030.00 689.1 L1030.25 690.3 L1030.50 691.7 L1030.75 693.1 L1031.00 694.5 L1031.25 695.7 L1031.50 696.7 L1031.75 697.5 L1032.00 698.2 L1032.25 698.6 L1032.50 699.0 L1032.75 699.2 L1033.00 699.4 L1033.25 699.5 L1033.50 699.6 L1033.75 699.7 L1034.00 699.7 L1034.25 699.7 L1034.50 699.7 L1034.75 699.7 L1035.00 699.6 L1035.25 699.5 L1035.50 699.3 L1035.75 699.0 L1036.00 698.6 L1036.25 698.1 L1036.50 697.5 L1036.75 696.8 L1037.00 696.2 L1037.25 695.6 L1037.50 695.2 L1037.75 695.1 L1038.00 695.3 L1038.25 695.8 L1038.50 696.5 L1038.75 697.1 L1039.00 697.8 L1039.25 698.3 L1039.50 698.8 L1039.75 699.2 L1040.00 699.4 L1040.25 699.6 L1040.50 699.7 L1040.75 699.8 L1041.00 699.8 L1041.25 699.8 L1041.50 699.8 L1041.75 699.8 L1042.00 699.7 L1042.25 699.6 L1042.50 699.5 L1042.75 699.4 L1043.00 699.2 L1043.25 698.8 L1043.50 698.3 L1043.75 697.5 L1044.00 696.4 L1044.25 694.8 L1044.50 692.7 L1044.75 690.1 L1045.00 687.2 L1045.25 684.2 L1045.50 681.6 L1045.75 680.0 L1046.00 679.8 L1046.25 681.2 L1046.50 683.6 L1046.75 686.6 L1047.00 689.5 L1047.25 692.2 L1047.50 694.3 L1047.75 696.0 L1048.00 697.2 L1048.25 698.1 L1048.50 698.6 L1048.75 699.0 L1049.00 699.2 L1049.25 699.3 L1049.50 699.3 L1049.75 699.3 L1050.00 699.1 L1050.25 698.8 L1050.50 698.4 L1050.75 697.8 L1051.00 697.0 L1051.25 696.1 L1051.50 695.2 L1051.75 694.5 L1052.00 694.2 L1052.25 694.5 L1052.50 695.2 L1052.75 696.0 L1053.00 696.9 L1053.25 697.7 L1053.50 698.2 L1053.75 698.6 L1054.00 698.8 L1054.25 698.9 L1054.50 698.7 L1054.75 698.3 L1055.00 697.7 L1055.25 696.8 L1055.50 695.5 L1055.75 693.8 L1056.00 691.8 L1056.25 689.5 L1056.50 687.2 L1056.75 685.2 L1057.00 684.2 L1057.25 684.3 L1057.50 685.6 L1057.75 687.6 L1058.00 689.9 L1058.25 692.2 L1058.50 694.1 L1058.75 695.8 L1059.00 697.0 L1059.25 697.9 L1059.50 698.4 L1059.75 698.8 L1060.00 699.0 L1060.25 699.2 L1060.50 699.2 L1060.75 699.2 L1061.00 699.2 L1061.25 699.1 L1061.50 699.0 L1061.75 698.9 L1062.00 698.6 L1062.25 698.2 L1062.50 697.5 L1062.75 696.4 L1063.00 694.8 L1063.25 692.6 L1063.50 689.6 L1063.75 686.0 L1064.00 682.0 L1064.25 678.1 L1064.50 675.3 L1064.75 674.4 L1065.00 675.7 L1065.25 678.4 L1065.50 681.4 L1065.75 683.7 L1066.00 684.6 L1066.25 683.4 L1066.50 679.9 L1066.75 673.9 L1067.00 665.9 L1067.25 656.5 L1067.50 647.2 L1067.75 639.5 L1068.00 635.2 L1068.25 635.8 L1068.50 640.9 L1068.75 649.1 L1069.00 658.8 L1069.25 668.2 L1069.50 676.4 L1069.75 682.7 L1070.00 687.1 L1070.25 689.7 L1070.50 691.0 L1070.75 691.5 L1071.00 691.4 L1071.25 691.3 L1071.50 691.4 L1071.75 691.8 L1072.00 692.6 L1072.25 693.5 L1072.50 694.6 L1072.75 695.6 L1073.00 696.5 L1073.25 697.4 L1073.50 698.0 L1073.75 698.6 L1074.00 699.0 L1074.25 699.3 L1074.50 699.5 L1074.75 699.7 L1075.00 699.8 L1075.25 699.9 L1075.50 700.0 L1075.75 700.0 L1076.00 700.1 L1076.25 700.1 L1076.50 700.1 L1076.75 700.2 L1077.00 700.2 L1077.25 700.2 L1077.50 700.2 L1077.75 700.2 L1078.00 700.2 L1078.25 700.2 L1078.50 700.2 L1078.75 700.2 L1079.00 700.2 L1079.25 700.1 L1079.50 700.1 L1079.75 700.1 L1080.00 700.1 L1080.25 700.0 L1080.50 700.0 L1080.75 699.9 L1081.00 699.8 L1081.25 699.7 L1081.50 699.6 L1081.75 699.4 L1082.00 699.2 L1082.25 698.8 L1082.50 698.2 L1082.75 697.4 L1083.00 696.1 L1083.25 694.3 L1083.50 691.9 L1083.75 688.9 L1084.00 685.3 L1084.25 681.5 L1084.50 678.0 L1084.75 675.3 L1085.00 674.2 L1085.25 675.2 L1085.50 677.9 L1085.75 681.4 L1086.00 685.2 L1086.25 688.6 L1086.50 691.6 L1086.75 693.9 L1087.00 695.5 L1087.25 696.5 L1087.50 697.0 L1087.75 697.1 L1088.00 696.7 L1088.25 696.1 L1088.50 695.3 L1088.75 694.3 L1089.00 693.6 L1089.25 693.2 L1089.50 693.4 L1089.75 694.1 L1090.00 695.0 L1090.25 696.0 L1090.50 696.9 L1090.75 697.5 L1091.00 697.9 L1091.25 698.1 L1091.50 698.0 L1091.75 697.6 L1092.00 696.8 L1092.25 695.6 L1092.50 693.8 L1092.75 691.4 L1093.00 688.4 L1093.25 684.9 L1093.50 681.2 L1093.75 677.9 L1094.00 675.5 L1094.25 675.0 L1094.50 676.3 L1094.75 679.1 L1095.00 682.7 L1095.25 686.3 L1095.50 689.6 L1095.75 692.4 L1096.00 694.5 L1096.25 696.1 L1096.50 697.2 L1096.75 697.9 L1097.00 698.2 L1097.25 698.3 L1097.50 698.2 L1097.75 697.8 L1098.00 697.1 L1098.25 696.1 L1098.50 694.6 L1098.75 692.8 L1099.00 690.6 L1099.25 688.2 L1099.50 686.0 L1099.75 684.3 L1100.00 683.7 L1100.25 684.4 L1100.50 686.1 L1100.75 688.4 L1101.00 690.8 L1101.25 693.1 L1101.50 695.0 L1101.75 696.6 L1102.00 697.7 L1102.25 698.5 L1102.50 699.1 L1102.75 699.4 L1103.00 699.7 L1103.25 699.8 L1103.50 700.0 L1103.75 700.0 L1104.00 700.1 L1104.25 700.1 L1104.50 700.1 L1104.75 700.1 L1105.00 700.1 L1105.25 700.1 L1105.50 700.0 L1105.75 700.0 L1106.00 699.9 L1106.25 699.8 L1106.50 699.7 L1106.75 699.6 L1107.00 699.4 L1107.25 699.2 L1107.50 699.1 L1107.75 698.9 L1108.00 698.7 L1108.25 698.6 L1108.50 698.4 L1108.75 698.3 L1109.00 698.2 L1109.25 698.2 L1109.50 698.2 L1109.75 698.2 L1110.00 698.2 L1110.25 698.1 L1110.50 697.8 L1110.75 697.0 L1111.00 695.4 L1111.25 692.5 L1111.50 687.7 L1111.75 680.8 L1112.00 672.1 L1112.25 662.8 L1112.50 655.0 L1112.75 651.2 L1113.00 652.9 L1113.25 659.6 L1113.50 668.7 L1113.75 677.9 L1114.00 685.7 L1114.25 691.5 L1114.50 695.2 L1114.75 697.4 L1115.00 698.6 L1115.25 699.1 L1115.50 699.4 L1115.75 699.5 L1116.00 699.6 L1116.25 699.5 L1116.50 699.3 L1116.75 699.1 L1117.00 698.6 L1117.25 697.9 L1117.50 696.9 L1117.75 695.6 L1118.00 694.0 L1118.25 692.3 L1118.50 690.5 L1118.75 689.1 L1119.00 688.2 L1119.25 688.3 L1119.50 689.3 L1119.75 690.9 L1120.00 692.6 L1120.25 694.3 L1120.50 695.8 L1120.75 697.0 L1121.00 697.9 L1121.25 698.5 L1121.50 698.9 L1121.75 699.0 L1122.00 699.0 L1122.25 698.7 L1122.50 698.3 L1122.75 697.6 L1123.00 696.8 L1123.25 695.6 L1123.50 694.3 L1123.75 692.8 L1124.00 691.2 L1124.25 689.6 L1124.50 688.4 L1124.75 687.6 L1125.00 687.6 L1125.25 688.2 L1125.50 689.5 L1125.75 691.0 L1126.00 692.6 L1126.25 694.2 L1126.50 695.7 L1126.75 696.9 L1127.00 697.9 L1127.25 698.6 L1127.50 699.2 L1127.75 699.6 L1128.00 699.9 L1128.25 700.1 L1128.50 700.3 L1128.75 700.4 L1129.00 700.5 L1129.25 700.5 L1129.50 700.6 L1129.75 700.6 L1130.00 700.7 L1130.25 700.7 L1130.50 700.7 L1130.75 700.7 L1131.00 700.8 L1131.25 700.8 L1131.50 700.8 L1131.75 700.8 L1132.00 700.8 L1132.25 700.8 L1132.50 700.9 L1132.75 700.9 L1133.00 700.9 L1133.25 700.9 L1133.50 700.9 L1133.75 700.9 L1134.00 700.9 L1134.25 700.9 L1134.50 700.9 L1134.75 700.9 L1135.00 700.9 L1135.25 700.9 L1135.50 700.9 L1135.75 700.9 L1136.00 700.9 L1136.25 700.9 L1136.50 700.9 L1136.75 700.9 L1137.00 700.9 L1137.25 700.9 L1137.50 700.9 L1137.75 700.9 L1138.00 700.9 L1138.25 700.9 L1138.50 700.8 L1138.75 700.8 L1139.00 700.8 L1139.25 700.8 L1139.50 700.8 L1139.75 700.7 L1140.00 700.7 L1140.25 700.7 L1140.50 700.6 L1140.75 700.5 L1141.00 700.4 L1141.25 700.3 L1141.50 700.0 L1141.75 699.7 L1142.00 699.2 L1142.25 698.6 L1142.50 697.7 L1142.75 696.6 L1143.00 695.4 L1143.25 694.0 L1143.50 692.6 L1143.75 691.3 L1144.00 690.5 L1144.25 690.3 L1144.50 690.7 L1144.75 691.8 L1145.00 693.1 L1145.25 694.5 L1145.50 695.8 L1145.75 697.0 L1146.00 698.0 L1146.25 698.7 L1146.50 699.3 L1146.75 699.7 L1147.00 700.0 L1147.25 700.1 L1147.50 700.2 L1147.75 700.3 L1148.00 700.4 L1148.25 700.4 L1148.50 700.4 L1148.75 700.4 L1149.00 700.3 L1149.25 700.3 L1149.50 700.3 L1149.75 700.2 L1150.00 700.1 L1150.25 700.0 L1150.50 699.8 L1150.75 699.5 L1151.00 699.1 L1151.25 698.5 L1151.50 697.8 L1151.75 696.7 L1152.00 695.4 L1152.25 693.9 L1152.50 692.0 L1152.75 690.0 L1153.00 687.9 L1153.25 686.0 L1153.50 684.6 L1153.75 683.9 L1154.00 684.1 L1154.25 685.1 L1154.50 686.7 L1154.75 688.4 L1155.00 690.2 L1155.25 691.6 L1155.50 692.7 L1155.75 693.4 L1156.00 693.7 L1156.25 693.5 L1156.50 693.1 L1156.75 692.5 L1157.00 692.0 L1157.25 691.6 L1157.50 691.4 L1157.75 690.9 L1158.00 688.8 L1158.25 682.9 L1158.50 669.6 L1158.75 644.6 L1159.00 604.5 L1159.25 549.9 L1159.50 488.3 L1159.75 433.8 L1160.00 402.8 L1160.25 406.6 L1160.50 443.9 L1160.75 501.6 L1161.00 563.3 L1161.25 616.0 L1161.50 653.8 L1161.75 677.1 L1162.00 689.6 L1162.25 695.5 L1162.50 698.0 L1162.75 699.1 L1163.00 699.5 L1163.25 699.7 L1163.50 699.8 L1163.75 699.9 L1164.00 700.0 L1164.25 700.0 L1164.50 700.0 L1164.75 700.0 L1165.00 700.0 L1165.25 700.0 L1165.50 699.9 L1165.75 699.9 L1166.00 699.8 L1166.25 699.6 L1166.50 699.4 L1166.75 699.0 L1167.00 698.5 L1167.25 697.9 L1167.50 696.9 L1167.75 695.6 L1168.00 693.8 L1168.25 691.6 L1168.50 688.9 L1168.75 685.8 L1169.00 682.4 L1169.25 679.1 L1169.50 676.1 L1169.75 674.0 L1170.00 673.2 L1170.25 673.9 L1170.50 676.0 L1170.75 679.0 L1171.00 682.3 L1171.25 685.7 L1171.50 688.8 L1171.75 691.4 L1172.00 693.6 L1172.25 695.3 L1172.50 696.6 L1172.75 697.5 L1173.00 698.0 L1173.25 698.3 L1173.50 698.0 L1173.75 696.8 L1174.00 693.6 L1174.25 686.6 L1174.50 673.5 L1174.75 652.1 L1175.00 622.2 L1175.25 587.2 L1175.50 554.3 L1175.75 533.1 L1176.00 531.0 L1176.25 548.9 L1176.50 580.3 L1176.75 615.7 L1177.00 647.1 L1177.25 670.4 L1177.50 685.1 L1177.75 693.3 L1178.00 697.3 L1178.25 699.0 L1178.50 699.7 L1178.75 700.0 L1179.00 700.1 L1179.25 700.1 L1179.50 700.0 L1179.75 699.9 L1180.00 699.7 L1180.25 699.5 L1180.50 699.2 L1180.75 698.9 L1181.00 698.7 L1181.25 698.5 L1181.50 698.4 L1181.75 698.5 L1182.00 698.7 L1182.25 699.0 L1182.50 699.4 L1182.75 699.7 L1183.00 699.9 L1183.25 700.2 L1183.50 700.4 L1183.75 700.5 L1184.00 700.6 L1184.25 700.6 L1184.50 700.6 L1184.75 700.6 L1185.00 700.6 L1185.25 700.6 L1185.50 700.5 L1185.75 700.4 L1186.00 700.3 L1186.25 700.1 L1186.50 699.8 L1186.75 699.4 L1187.00 698.6 L1187.25 697.4 L1187.50 695.8 L1187.75 693.6 L1188.00 690.8 L1188.25 687.7 L1188.50 684.7 L1188.75 682.3 L1189.00 681.4 L1189.25 682.3 L1189.50 684.7 L1189.75 687.7 L1190.00 690.8 L1190.25 693.6 L1190.50 695.8 L1190.75 697.5 L1191.00 698.6 L1191.25 699.4 L1191.50 699.8 L1191.75 700.1 L1192.00 700.3 L1192.25 700.5 L1192.50 700.6 L1192.75 700.6 L1193.00 700.7 L1193.25 700.7 L1193.50 700.7 L1193.75 700.8 L1194.00 700.8 L1194.25 700.8 L1194.50 700.8 L1194.75 700.8 L1195.00 700.7 L1195.25 700.7 L1195.50 700.6 L1195.75 700.5 L1196.00 700.3 L1196.25 700.1 L1196.50 699.7 L1196.75 699.4 L1197.00 698.9 L1197.25 698.4 L1197.50 698.0 L1197.75 697.6 L1198.00 697.4 L1198.25 697.4 L1198.50 697.6 L1198.75 698.0 L1199.00 698.5 L1199.25 698.9 L1199.50 699.4 L1199.75 699.7 L1200.00 700.0 L1200.25 700.2 L1200.50 700.4 L1200.75 700.4 L1201.00 700.5 L1201.25 700.5 L1201.50 700.5 L1201.75 700.4 L1202.00 700.3 L1202.25 700.1 L1202.50 699.9 L1202.75 699.5 L1203.00 699.1 L1203.25 698.5 L1203.50 697.9 L1203.75 697.1 L1204.00 696.4 L1204.25 695.7 L1204.50 695.3 L1204.75 695.1 L1205.00 695.3 L1205.25 695.7 L1205.50 696.3 L1205.75 696.9 L1206.00 697.4 L1206.25 697.8 L1206.50 697.9 L1206.75 697.6 L1207.00 696.8 L1207.25 695.1 L1207.50 692.0 L1207.75 687.3 L1208.00 680.6 L1208.25 671.8 L1208.50 661.6 L1208.75 651.0 L1209.00 641.7 L1209.25 636.0 L1209.50 635.4 L1209.75 640.3 L1210.00 649.0 L1210.25 659.5 L1210.50 669.9 L1210.75 679.1 L1211.00 686.3 L1211.25 691.5 L1211.50 694.9 L1211.75 697.0 L1212.00 698.3 L1212.25 698.9 L1212.50 699.3 L1212.75 699.6 L1213.00 699.7 L1213.25 699.7 L1213.50 699.7 L1213.75 699.7 L1214.00 699.6 L1214.25 699.4 L1214.50 699.2 L1214.75 698.9 L1215.00 698.5 L1215.25 698.2 L1215.50 697.9 L1215.75 697.6 L1216.00 697.5 L1216.25 697.6 L1216.50 697.9 L1216.75 698.2 L1217.00 698.5 L1217.25 698.9 L1217.50 699.2 L1217.75 699.4 L1218.00 699.6 L1218.25 699.7 L1218.50 699.7 L1218.75 699.7 L1219.00 699.6 L1219.25 699.5 L1219.50 699.3 L1219.75 699.1 L1220.00 698.8 L1220.25 698.4 L1220.50 698.0 L1220.75 697.6 L1221.00 697.1 L1221.25 696.7 L1221.50 696.3 L1221.75 696.0 L1222.00 695.8 L1222.25 695.7 L1222.50 695.8 L1222.75 696.0 L1223.00 696.1 L1223.25 696.3 L1223.50 696.2 L1223.75 695.8 L1224.00 694.7 L1224.25 692.3 L1224.50 687.5 L1224.75 679.1 L1225.00 665.1 L1225.25 644.1 L1225.50 615.3 L1225.75 579.7 L1226.00 540.5 L1226.25 503.2 L1226.50 474.6 L1226.75 461.3 L1227.00 467.1 L1227.25 490.2 L1227.50 524.9 L1227.75 564.1 L1228.00 601.6 L1228.25 633.3 L1228.50 657.5 L1228.75 674.2 L1229.00 684.7 L1229.25 690.9 L1229.50 694.3 L1229.75 696.0 L1230.00 696.9 L1230.25 697.4 L1230.50 697.6 L1230.75 697.8 L1231.00 697.9 L1231.25 697.9 L1231.50 697.9 L1231.75 697.9 L1232.00 697.8 L1232.25 697.8 L1232.50 697.6 L1232.75 697.5 L1233.00 697.3 L1233.25 697.0 L1233.50 696.7 L1233.75 696.3 L1234.00 695.8 L1234.25 695.3 L1234.50 694.7 L1234.75 694.0 L1235.00 693.4 L1235.25 692.7 L1235.50 692.2 L1235.75 691.7 L1236.00 691.3 L1236.25 691.1 L1236.50 691.1 L1236.75 691.1 L1237.00 691.2 L1237.25 691.2 L1237.50 691.2 L1237.75 691.2 L1238.00 691.0 L1238.25 690.7 L1238.50 690.3 L1238.75 689.8 L1239.00 689.1 L1239.25 688.3 L1239.50 687.3 L1239.75 686.1 L1240.00 684.8 L1240.25 683.2 L1240.50 681.4 L1240.75 679.4 L1241.00 677.0 L1241.25 674.1 L1241.50 670.9 L1241.75 667.1 L1242.00 662.6 L1242.25 656.2 L1242.50 649.6 L1242.75 641.7 L1243.00 632.2 L1243.25 620.6 L1243.50 606.5 L1243.75 589.2 L1244.00 568.0 L1244.25 542.1 L1244.50 510.9 L1244.75 475.7 L1245.00 445.5 L1245.25 421.4 L1245.50 404.6 L1245.75 396.7 L1246.00 396.6 L1246.25 396.6 L1246.50 396.6 L1246.75 396.6 L1247.00 396.6 L1247.25 396.6 L1247.50 396.6 L1247.75 396.5 L1248.00 396.5 L1248.25 396.5 L1248.50 404.5 L1248.75 421.2 L1249.00 445.2 L1249.25 475.4 L1249.50 510.5 L1249.75 541.8 L1250.00 567.6 L1250.25 588.7 L1250.50 606.0 L1250.75 620.1 L1251.00 631.7 L1251.25 641.2 L1251.50 649.0 L1251.75 655.6 L1252.00 661.9 L1252.25 666.3 L1252.50 670.1 L1252.75 673.3 L1253.00 676.0 L1253.25 678.4 L1253.50 680.4 L1253.75 682.1 L1254.00 683.6 L1254.25 684.9 L1254.50 686.1 L1254.75 687.1 L1255.00 687.9 L1255.25 688.6 L1255.50 689.3 L1255.75 689.8 L1256.00 690.2 L1256.25 690.6 L1256.50 690.9 L1256.75 691.1 L1257.00 691.3 L1257.25 691.4 L1257.50 691.4 L1257.75 691.4 L1258.00 691.3 L1258.25 691.1 L1258.50 690.9 L1258.75 690.6 L1259.00 690.2 L1259.25 689.7 L1259.50 689.1 L1259.75 688.4 L1260.00 687.6 L1260.25 686.7 L1260.50 685.5 L1260.75 684.2 L1261.00 682.7 L1261.25 680.9 L1261.50 678.8 L1261.75 676.3 L1262.00 673.3 L1262.25 669.1 L1262.50 664.7 L1262.75 659.5 L1263.00 653.1 L1263.25 645.2 L1263.50 635.6 L1263.75 623.8 L1264.00 609.0 L1264.25 590.7 L1264.50 567.9 L1264.75 539.6 L1265.00 505.2 L1265.25 470.1 L1265.50 440.4 L1265.75 417.5 L1266.00 402.8 L1266.25 397.8 L1266.50 397.8 L1266.75 397.9 L1267.00 397.9 L1267.25 397.9 L1267.50 398.0 L1267.75 398.0 L1268.00 398.0 L1268.25 398.1 L1268.50 407.2 L1268.75 425.4 L1269.00 451.2 L1269.25 483.3 L1269.50 520.3 L1269.75 552.3 L1270.00 578.3 L1270.25 599.3 L1270.50 616.2 L1270.75 629.8 L1271.00 640.7 L1271.25 649.6 L1271.50 656.9 L1271.75 662.9 L1272.00 667.9 L1272.25 672.7 L1272.50 676.0 L1272.75 678.9 L1273.00 681.3 L1273.25 683.4 L1273.50 685.2 L1273.75 686.8 L1274.00 688.1 L1274.25 689.3 L1274.50 690.3 L1274.75 691.2 L1275.00 692.0 L1275.25 692.7 L1275.50 693.3 L1275.75 693.8 L1276.00 694.3 L1276.25 694.6 L1276.50 695.0 L1276.75 695.2 L1277.00 695.4 L1277.25 695.5 L1277.50 695.5 L1277.75 695.3 L1278.00 694.8 L1278.25 693.6 L1278.50 691.1 L1278.75 686.5 L1279.00 678.3 L1279.25 665.0 L1279.50 645.0 L1279.75 617.2 L1280.00 582.2 L1280.25 542.0 L1280.50 501.2 L1280.75 465.8 L1281.00 442.5 L1281.25 436.8 L1281.50 450.2 L1281.75 479.3 L1282.00 517.9 L1282.25 559.3 L1282.50 598.0 L1282.75 630.5 L1283.00 655.3 L1283.25 672.7 L1283.50 684.0 L1283.75 690.8 L1284.00 694.7 L1284.25 696.9 L1284.50 698.1 L1284.75 698.8 L1285.00 699.2 L1285.25 699.5 L1285.50 699.7 L1285.75 699.9 L1286.00 700.1 L1286.25 700.2 L1286.50 700.3 L1286.75 700.5 L1287.00 700.6 L1287.25 700.7 L1287.50 700.7 L1287.75 700.8 L1288.00 700.9 L1288.25 701.0 L1288.50 701.0 L1288.75 701.1 L1289.00 701.1 L1289.25 701.2 L1289.50 701.2 L1289.75 701.3 L1290.00 701.3 L1290.25 701.4 L1290.50 701.4 L1290.75 701.4 L1291.00 701.5 L1291.25 701.5 L1291.50 701.5 L1291.75 701.6 L1292.00 701.6 L1292.25 701.6 L1292.50 701.6 L1292.75 701.7 L1293.00 701.7 L1293.25 701.7 L1293.50 701.7 L1293.75 701.7 L1294.00 701.8 L1294.25 701.8 L1294.50 701.8 L1294.75 701.8 L1295.00 701.8 L1295.25 701.8 L1295.50 701.8 L1295.75 701.9 L1296.00 701.9 L1296.25 701.9 L1296.50 701.9 L1296.75 701.9 L1297.00 701.9 L1297.25 701.9 L1297.50 701.9 L1297.75 702.0 L1298.00 702.0 L1298.25 702.0 L1298.50 702.0 L1298.75 702.0 L1299.00 702.0 L1299.25 702.0 L1299.50 702.0 L1299.75 702.0 L1300.00 702.0 L1300.25 702.0 L1300.50 702.0 L1300.75 702.0 L1301.00 702.0 L1301.25 702.0 L1301.50 702.0 L1301.75 702.0 L1302.00 702.0 L1302.25 702.0 L1302.50 702.0 L1302.75 702.0 L1303.00 702.0 L1303.25 702.0 L1303.50 702.0 L1303.75 701.9 L1304.00 701.9 L1304.25 701.9 L1304.50 701.9 L1304.75 701.9 L1305.00 701.9 L1305.25 701.9 L1305.50 701.9 L1305.75 701.8 L1306.00 701.8 L1306.25 701.8 L1306.50 701.8 L1306.75 701.8 L1307.00 701.7 L1307.25 701.7 L1307.50 701.7 L1307.75 701.7 L1308.00 701.6 L1308.25 701.6 L1308.50 701.6 L1308.75 701.5 L1309.00 701.5 L1309.25 701.5 L1309.50 701.4 L1309.75 701.4 L1310.00 701.3 L1310.25 701.2 L1310.50 701.2 L1310.75 701.1 L1311.00 701.0 L1311.25 700.9 L1311.50 700.8 L1311.75 700.7 L1312.00 700.5 L1312.25 700.3 L1312.50 700.1 L1312.75 699.7 L1313.00 699.1 L1313.25 698.3 L1313.50 696.9 L1313.75 694.7 L1314.00 691.2 L1314.25 686.0 L1314.50 678.5 L1314.75 668.4 L1315.00 655.3 L1315.25 639.4 L1315.50 621.5 L1315.75 602.7 L1316.00 584.8 L1316.25 570.1 L1316.50 560.6 L1316.75 558.3 L1317.00 563.6 L1317.25 575.3 L1317.50 591.5 L1317.75 610.0 L1318.00 628.5 L1318.25 645.7 L1318.50 660.4 L1318.75 672.3 L1319.00 681.2 L1319.25 687.6 L1319.50 692.0 L1319.75 694.8 L1320.00 696.6 L1320.25 697.6 L1320.50 698.2 L1320.75 698.6 L1321.00 698.8 L1321.25 698.8 L1321.50 698.8 L1321.75 698.8 L1322.00 698.6 L1322.25 698.4 L1322.50 698.0 L1322.75 697.2 L1323.00 696.1 L1323.25 694.1 L1323.50 691.0 L1323.75 686.2 L1324.00 679.2 L1324.25 669.5 L1324.50 656.6 L1324.75 640.7 L1325.00 622.1 L1325.25 601.9 L1325.50 582.0 L1325.75 564.4 L1326.00 551.6 L1326.25 545.9 L1326.50 548.3 L1326.75 558.4 L1327.00 574.3 L1327.25 593.6 L1327.50 613.8 L1327.75 633.1 L1328.00 650.2 L1328.25 664.2 L1328.50 675.1 L1328.75 683.1 L1329.00 688.6 L1329.25 692.2 L1329.50 694.5 L1329.75 695.9 L1330.00 696.7 L1330.25 697.2 L1330.50 697.4 L1330.75 697.5 L1331.00 697.5 L1331.25 697.5 L1331.50 697.4 L1331.75 697.3 L1332.00 697.2 L1332.25 697.0 L1332.50 696.8 L1332.75 696.6 L1333.00 696.3 L1333.25 696.0 L1333.50 695.7 L1333.75 695.3 L1334.00 694.8 L1334.25 694.3 L1334.50 693.7 L1334.75 693.1 L1335.00 692.3 L1335.25 691.5 L1335.50 690.5 L1335.75 689.4 L1336.00 688.2 L1336.25 686.7 L1336.50 685.1 L1336.75 683.2 L1337.00 681.0 L1337.25 678.4 L1337.50 675.3 L1337.75 671.0 L1338.00 666.6 L1338.25 661.2 L1338.50 654.7 L1338.75 646.8 L1339.00 637.1 L1339.25 625.2 L1339.50 610.3 L1339.75 591.9 L1340.00 568.9 L1340.25 540.5 L1340.50 506.0 L1340.75 470.7 L1341.00 440.9 L1341.25 417.9 L1341.50 403.1 L1341.75 398.1 L1342.00 398.1 L1342.25 398.1 L1342.50 398.1 L1342.75 398.1 L1343.00 398.1 L1343.25 398.1 L1343.50 398.1 L1343.75 398.1 L1344.00 407.2 L1344.25 425.5 L1344.50 451.4 L1344.75 483.5 L1345.00 520.6 L1345.25 552.7 L1345.50 578.8 L1345.75 599.8 L1346.00 616.7 L1346.25 630.3 L1346.50 641.3 L1346.75 650.3 L1347.00 657.6 L1347.25 663.6 L1347.50 668.6 L1347.75 673.4 L1348.00 676.8 L1348.25 679.6 L1348.50 682.1 L1348.75 684.2 L1349.00 686.0 L1349.25 687.6 L1349.50 689.0 L1349.75 690.2 L1350.00 691.2 L1350.25 692.1 L1350.50 693.0 L1350.75 693.7 L1351.00 694.4 L1351.25 694.9 L1351.50 695.5 L1351.75 695.9 L1352.00 696.4 L1352.25 696.8 L1352.50 697.1 L1352.75 697.4 L1353.00 697.7 L1353.25 698.0 L1353.50 698.2 L1353.75 698.5 L1354.00 698.7 L1354.25 698.9 L1354.50 699.0 L1354.75 699.2 L1355.00 699.3" fill="none" stroke="#4c9573" stroke-width="1.05" stroke-linejoin="round"/>
<path d="M703.30 681.9 V695.5 M710.14 662.0 V695.5 M746.77 686.2 V695.5 M766.12 681.2 V695.5 M784.47 688.5 V695.5 M801.86 674.5 V695.5 M978.66 497.6 V695.5 M1018.76 669.8 V695.5 M1112.74 651.2 V695.5 M1159.58 402.8 V695.5 M1176.13 531.0 V695.5 M1189.10 681.4 V695.5" stroke="#5a5fae" stroke-width="1.8" fill="none" opacity=".85"/>
<path d="M703.5 342.0 V714.5 M710.5 342.0 V714.5 M746.5 342.0 V714.5 M766.5 342.0 V714.5 M784.5 342.0 V714.5 M801.5 342.0 V714.5 M978.5 342.0 V714.5 M1018.5 342.0 V714.5 M1112.5 342.0 V714.5 M1159.5 342.0 V714.5 M1176.5 342.0 V714.5 M1189.5 342.0 V714.5" stroke="#652ca4" stroke-width="1" stroke-dasharray="3.6 1.7" fill="none"/>
<text transform="translate(714.90 353.2) rotate(-90)" text-anchor="end" font-size="11.5" textLength="38.2" lengthAdjust="spacing" fill="#111">4158.59</text>
<text transform="translate(721.74 353.2) rotate(-90)" text-anchor="end" font-size="11.5" textLength="38.2" lengthAdjust="spacing" fill="#111">4200.67</text>
<text transform="translate(758.37 353.2) rotate(-90)" text-anchor="end" font-size="11.5" textLength="23.6" lengthAdjust="spacing" fill="#111">4426</text>
<text transform="translate(777.72 353.2) rotate(-90)" text-anchor="end" font-size="11.5" textLength="38.2" lengthAdjust="spacing" fill="#111">4545.05</text>
<text transform="translate(796.07 353.2) rotate(-90)" text-anchor="end" font-size="11.5" textLength="32.6" lengthAdjust="spacing" fill="#111">4657.9</text>
<text transform="translate(813.46 353.2) rotate(-90)" text-anchor="end" font-size="11.5" textLength="38.2" lengthAdjust="spacing" fill="#111">4764.87</text>
<text transform="translate(990.26 353.2) rotate(-90)" text-anchor="end" font-size="11.5" textLength="38.2" lengthAdjust="spacing" fill="#111">5852.48</text>
<text transform="translate(1030.36 353.2) rotate(-90)" text-anchor="end" font-size="11.5" textLength="38.2" lengthAdjust="spacing" fill="#111">6099.16</text>
<text transform="translate(1124.34 353.2) rotate(-90)" text-anchor="end" font-size="11.5" textLength="38.2" lengthAdjust="spacing" fill="#111">6677.28</text>
<text transform="translate(1171.18 353.2) rotate(-90)" text-anchor="end" font-size="11.5" textLength="38.2" lengthAdjust="spacing" fill="#111">6965.43</text>
<text transform="translate(1187.73 353.2) rotate(-90)" text-anchor="end" font-size="11.5" textLength="38.2" lengthAdjust="spacing" fill="#111">7067.22</text>
<text transform="translate(1200.70 353.2) rotate(-90)" text-anchor="end" font-size="11.5" textLength="38.2" lengthAdjust="spacing" fill="#111">7147.04</text>
<path d="M312.5 341.5 H1358.5 V714.5 H312.5 Z" fill="none" stroke="#000" stroke-width="1" shape-rendering="crispEdges"/>
<path d="M312.0 703.5 h-7 M312.0 690.5 h-4 M312.0 677.5 h-4 M312.0 664.5 h-4 M312.0 650.5 h-4 M312.0 637.5 h-7 M312.0 624.5 h-4 M312.0 611.5 h-4 M312.0 597.5 h-4 M312.0 584.5 h-4 M312.0 571.5 h-7 M312.0 557.5 h-4 M312.0 544.5 h-4 M312.0 531.5 h-4 M312.0 518.5 h-4 M312.0 504.5 h-7 M312.0 491.5 h-4 M312.0 478.5 h-4 M312.0 465.5 h-4 M312.0 451.5 h-4 M312.0 438.5 h-7 M312.0 425.5 h-4 M312.0 411.5 h-4 M312.0 398.5 h-4 M312.0 385.5 h-4 M312.0 372.5 h-7 M312.0 358.5 h-4 M312.0 345.5 h-4 M319.5 715.0 v4 M336.5 715.0 v4 M352.5 715.0 v7 M368.5 715.0 v4 M384.5 715.0 v4 M401.5 715.0 v4 M417.5 715.0 v4 M433.5 715.0 v7 M449.5 715.0 v4 M466.5 715.0 v4 M482.5 715.0 v4 M498.5 715.0 v4 M514.5 715.0 v7 M531.5 715.0 v4 M547.5 715.0 v4 M563.5 715.0 v4 M579.5 715.0 v4 M596.5 715.0 v7 M612.5 715.0 v4 M628.5 715.0 v4 M645.5 715.0 v4 M661.5 715.0 v4 M677.5 715.0 v7 M693.5 715.0 v4 M710.5 715.0 v4 M726.5 715.0 v4 M742.5 715.0 v4 M758.5 715.0 v7 M775.5 715.0 v4 M791.5 715.0 v4 M807.5 715.0 v4 M823.5 715.0 v4 M840.5 715.0 v7 M856.5 715.0 v4 M872.5 715.0 v4 M888.5 715.0 v4 M905.5 715.0 v4 M921.5 715.0 v7 M937.5 715.0 v4 M953.5 715.0 v4 M970.5 715.0 v4 M986.5 715.0 v4 M1002.5 715.0 v7 M1018.5 715.0 v4 M1035.5 715.0 v4 M1051.5 715.0 v4 M1067.5 715.0 v4 M1083.5 715.0 v7 M1100.5 715.0 v4 M1116.5 715.0 v4 M1132.5 715.0 v4 M1148.5 715.0 v4 M1165.5 715.0 v7 M1181.5 715.0 v4 M1197.5 715.0 v4 M1213.5 715.0 v4 M1230.5 715.0 v4 M1246.5 715.0 v7 M1262.5 715.0 v4 M1278.5 715.0 v4 M1295.5 715.0 v4 M1311.5 715.0 v4 M1327.5 715.0 v7 M1344.5 715.0 v4" stroke="#000" stroke-width="1" shape-rendering="crispEdges" fill="none"/>
<defs><linearGradient id="sp" x1="0" x2="1" y1="0" y2="0"><stop offset="0.0000" stop-color="#180a3c"/><stop offset="0.0333" stop-color="#380a7c"/><stop offset="0.0667" stop-color="#5c10c0"/><stop offset="0.1000" stop-color="#7810ee"/><stop offset="0.1333" stop-color="#8a12f2"/><stop offset="0.1667" stop-color="#7810ea"/><stop offset="0.1833" stop-color="#4410e4"/><stop offset="0.2000" stop-color="#1212f0"/><stop offset="0.2333" stop-color="#104cf0"/><stop offset="0.2667" stop-color="#107cd4"/><stop offset="0.3000" stop-color="#10a0b4"/><stop offset="0.3333" stop-color="#10b890"/><stop offset="0.3500" stop-color="#10d060"/><stop offset="0.3667" stop-color="#12e634"/><stop offset="0.4000" stop-color="#14ee18"/><stop offset="0.5000" stop-color="#22f014"/><stop offset="0.5167" stop-color="#60f010"/><stop offset="0.5333" stop-color="#aef010"/><stop offset="0.5667" stop-color="#f0f010"/><stop offset="0.6000" stop-color="#ffd010"/><stop offset="0.6333" stop-color="#ffa210"/><stop offset="0.6667" stop-color="#ff7210"/><stop offset="0.6833" stop-color="#ff4210"/><stop offset="0.7000" stop-color="#f41410"/><stop offset="0.8000" stop-color="#f01010"/><stop offset="0.8333" stop-color="#c40a08"/><stop offset="0.8667" stop-color="#a20a08"/><stop offset="0.9000" stop-color="#820a08"/><stop offset="0.9333" stop-color="#620a08"/><stop offset="0.9667" stop-color="#421008"/><stop offset="1.0000" stop-color="#221008"/></linearGradient></defs>
<rect x="677" y="715" width="489" height="5" fill="url(#sp)"/>
<path d="M677.5 715 v7 M693.5 715 v4.6 M710.5 715 v4.6 M726.5 715 v4.6 M742.5 715 v4.6 M758.5 715 v7 M775.5 715 v4.6 M791.5 715 v4.6 M807.5 715 v4.6 M823.5 715 v4.6 M840.5 715 v7 M856.5 715 v4.6 M872.5 715 v4.6 M888.5 715 v4.6 M905.5 715 v4.6 M921.5 715 v7 M937.5 715 v4.6 M953.5 715 v4.6 M970.5 715 v4.6 M986.5 715 v4.6 M1002.5 715 v7 M1018.5 715 v4.6 M1035.5 715 v4.6 M1051.5 715 v4.6 M1067.5 715 v4.6 M1083.5 715 v7 M1100.5 715 v4.6 M1116.5 715 v4.6 M1132.5 715 v4.6 M1148.5 715 v4.6 M1165.5 715 v7" stroke="#000" stroke-width="1" shape-rendering="crispEdges" fill="none"/>
<text x="352.40" y="737.6" text-anchor="middle" textLength="24" lengthAdjust="spacing">2000</text>
<text x="433.68" y="737.6" text-anchor="middle" textLength="24" lengthAdjust="spacing">2500</text>
<text x="514.96" y="737.6" text-anchor="middle" textLength="24" lengthAdjust="spacing">3000</text>
<text x="596.24" y="737.6" text-anchor="middle" textLength="24" lengthAdjust="spacing">3500</text>
<text x="677.52" y="737.6" text-anchor="middle" textLength="24" lengthAdjust="spacing">4000</text>
<text x="758.80" y="737.6" text-anchor="middle" textLength="24" lengthAdjust="spacing">4500</text>
<text x="840.08" y="737.6" text-anchor="middle" textLength="24" lengthAdjust="spacing">5000</text>
<text x="921.36" y="737.6" text-anchor="middle" textLength="24" lengthAdjust="spacing">5500</text>
<text x="1002.64" y="737.6" text-anchor="middle" textLength="24" lengthAdjust="spacing">6000</text>
<text x="1083.92" y="737.6" text-anchor="middle" textLength="24" lengthAdjust="spacing">6500</text>
<text x="1165.20" y="737.6" text-anchor="middle" textLength="24" lengthAdjust="spacing">7000</text>
<text x="1246.48" y="737.6" text-anchor="middle" textLength="24" lengthAdjust="spacing">7500</text>
<text x="1327.76" y="737.6" text-anchor="middle" textLength="24" lengthAdjust="spacing">8000</text>
<text x="301" y="377.15" text-anchor="end" textLength="40.8" lengthAdjust="spacing">2.5e+07</text>
<text x="301" y="443.50" text-anchor="end" textLength="31.6" lengthAdjust="spacing">2e+07</text>
<text x="301" y="509.85" text-anchor="end" textLength="40.8" lengthAdjust="spacing">1.5e+07</text>
<text x="301" y="576.20" text-anchor="end" textLength="31.6" lengthAdjust="spacing">1e+07</text>
<text x="301" y="642.55" text-anchor="end" textLength="31.6" lengthAdjust="spacing">5e+06</text>
<text x="301" y="708.90" text-anchor="end">0</text>
<text x="834.4" y="753" text-anchor="middle" textLength="154" lengthAdjust="spacing">Longueur d'onde [Ångström]</text>
<text transform="translate(257.3 527.5) rotate(-90)" text-anchor="middle" textLength="87" lengthAdjust="spacing">Intensité relative</text>
<path d="M1187.6 364.8 H1198.5" stroke="#4c9573" stroke-width="1.1"/>
<text x="1205.6" y="368.9" textLength="137" lengthAdjust="spacing">HD14489_Calibration_C.fit</text>
<circle cx="218" cy="344.7" r="8.8" fill="#fff" stroke="#333" stroke-width="1.1"/><path d="M216.5 341.6 L219.8 344.7 L216.5 347.8" fill="none" stroke="#222" stroke-width="2"/>
<text transform="translate(223.2 394.5) rotate(-90)" text-anchor="middle" textLength="61" lengthAdjust="spacing" fill="#222">Outils profil</text>
</svg>
</body></html>
